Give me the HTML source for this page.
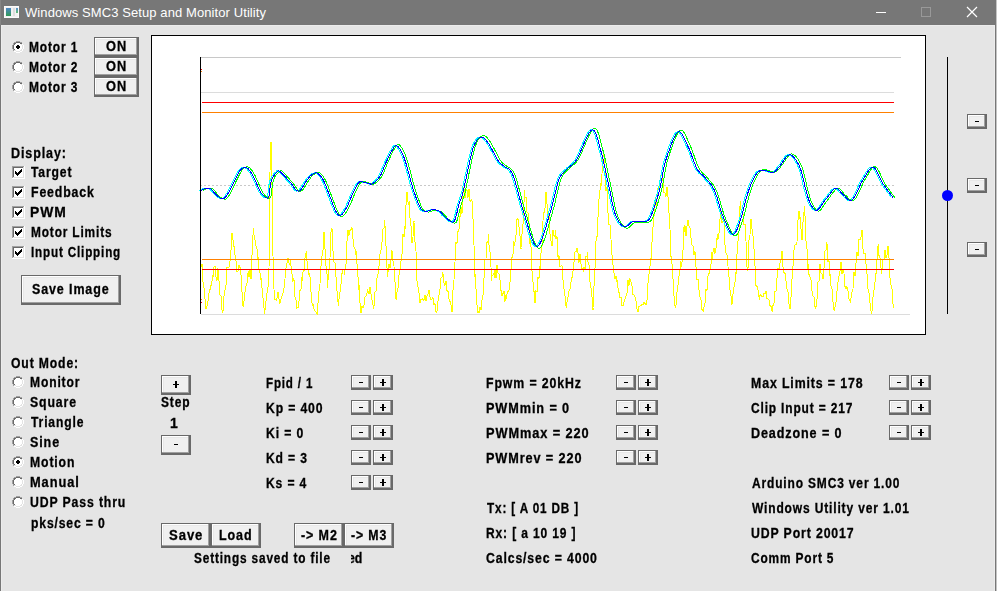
<!DOCTYPE html>
<html><head><meta charset="utf-8"><style>
*{margin:0;padding:0;box-sizing:border-box}
html,body{width:997px;height:591px;overflow:hidden;background:#e5e5e5}
body{position:relative;font-family:"Liberation Sans",sans-serif}
.t{position:absolute;font-weight:bold;font-size:14px;line-height:15px;white-space:pre;color:#000;filter:grayscale(1);-webkit-text-stroke:0.3px #000}
.b{position:absolute;background:#f0f0f0;border:1px solid #696969;box-shadow:inset -1px -1px #696969,inset -2px -2px #a0a0a0,inset 1px 1px #fff,inset 2px 2px #e8e8e8;font-weight:bold;font-size:13px;text-align:center;white-space:pre;color:#000}
.mi{position:absolute;left:7px;top:6px;width:4px;height:1px;background:#000}
.pl{position:absolute;left:6px;top:3px;width:6px;height:7px}
.pl:before{content:"";position:absolute;left:0;top:3px;width:6px;height:1px;background:#000}
.pl:after{content:"";position:absolute;left:2px;top:0;width:2px;height:7px;background:#000}
.r{position:absolute;width:12px;height:12px;border-radius:50%;background:#fff;border:1px solid;border-color:#a0a0a0 #fff #fff #a0a0a0;box-shadow:inset 1px 1px #696969}
.rd{position:absolute;left:3px;top:3px;width:4px;height:4px;border-radius:50%;background:#000}
.c{position:absolute;width:13px;height:13px;background:#fff;border:1px solid;border-color:#a0a0a0 #fff #fff #a0a0a0;box-shadow:inset 1px 1px #696969,inset -1px -1px #e3e3e3}
.px{position:absolute;shape-rendering:crispEdges}
</style></head><body>
<div style="position:absolute;left:0;top:0;width:996px;height:25px;background:#777"></div>
<div style="position:absolute;left:0;top:0;width:1px;height:591px;background:#777"></div>
<div style="position:absolute;left:995px;top:0;width:1px;height:591px;background:#777"></div>
<div style="position:absolute;left:996px;top:0;width:1px;height:591px;background:#c4c4c4"></div>
<div style="position:absolute;left:1px;top:25px;width:994px;height:1px;background:#ececec"></div>
<div style="position:absolute;left:1px;top:25px;width:1px;height:566px;background:#ececec"></div>
<div style="position:absolute;left:994px;top:25px;width:1px;height:566px;background:#ececec"></div>
<div style="position:absolute;left:4px;top:6px;width:15px;height:12px;background:#f2f2f2;border:1px solid #fbfbfb"></div>
<div style="position:absolute;left:6px;top:8px;width:5px;height:8px;background:linear-gradient(#4f86c6,#2f9a55)"></div>
<div style="position:absolute;left:13px;top:8px;width:2px;height:8px;background:#dedede"></div>
<div style="position:absolute;left:16px;top:8px;width:2px;height:5px;background:linear-gradient(#5a8fd0,#5fc070)"></div>
<div style="position:absolute;left:0;top:0;width:1px;height:25px;background:#858585"></div>
<div style="position:absolute;left:25px;top:4px;font-size:13px;line-height:17px;color:#fff;white-space:pre;letter-spacing:0.09px">Windows SMC3 Setup and Monitor Utility</div>
<svg style="position:absolute;left:870px;top:0" width="120" height="25">
<path d="M6 12.5 H16" stroke="#fff" stroke-width="1"/>
<rect x="51.5" y="7.5" width="9" height="9" fill="none" stroke="#999"/>
<path d="M97 7 L107 17 M107 7 L97 17" stroke="#fff" stroke-width="1.2"/>
</svg>
<div style="position:absolute;left:151px;top:35px;width:775px;height:300px;background:#fff;border:1px solid #000"></div>
<svg style="position:absolute;left:0;top:0" width="997" height="591" shape-rendering="crispEdges">
<path d="M201 57.5 H901" stroke="#c8c8c8" stroke-width="1"/>
<path d="M201 92.5 H894 M201 314.5 H910" stroke="#dcdcdc" stroke-width="1"/>
<path d="M200 185.5 H894" stroke="#c8c8c8" stroke-width="1" stroke-dasharray="2,2"/>
<polyline points="201.8,267.3 202.0,263.9 203.0,282.2 203.6,285.0 204.0,287.9 205.0,299.1 206.0,309.4 206.3,308.6 207.0,305.7 208.0,301.0 209.0,292.8 209.9,292.4 210.0,289.6 211.0,285.6 212.0,281.4 212.5,276.3 213.0,277.2 214.0,266.6 214.3,266.5 215.0,266.4 216.0,276.9 216.1,280.0 217.0,280.3 217.9,271.0 218.0,268.4 219.0,280.7 220.0,294.7 221.0,296.1 222.0,309.9 222.4,313.0 223.0,310.8 224.0,296.4 225.0,290.2 226.0,285.3 226.9,272.7 227.0,267.8 228.0,268.1 229.0,266.7 230.0,261.2 230.5,256.6 231.0,250.1 232.0,233.5 232.3,235.0 233.0,240.4 234.0,246.5 234.0,248.5 235.0,255.1 236.0,260.6 236.7,267.3 237.0,271.7 238.0,270.8 239.0,264.9 240.0,268.2 240.3,267.3 241.0,275.0 242.0,291.7 243.0,305.8 243.0,306.8 244.0,301.4 245.0,292.4 246.0,286.5 247.0,282.7 248.0,272.6 248.4,271.0 249.0,277.2 250.0,270.4 251.0,279.1 251.0,276.3 252.0,255.0 253.0,234.7 253.4,228.0 254.0,234.8 255.0,240.0 255.6,244.0 256.0,246.0 257.0,248.5 257.3,258.4 258.0,256.5 259.0,270.1 260.0,273.0 261.0,280.2 261.0,278.0 262.0,287.9 263.0,297.8 264.0,307.7 264.6,313.6 265.0,310.0 266.0,301.1 266.6,295.7 267.0,293.1 268.0,286.8 268.9,281.0 269.0,269.2 269.5,210.0 270.0,172.2 270.4,142.0 271.0,142.0 271.5,142.0 272.0,185.2 272.6,237.0 273.0,256.0 273.4,275.0 274.0,289.4 274.4,299.0 275.0,299.4 276.0,300.0 276.7,300.4 277.0,298.2 277.9,291.8 278.0,292.4 279.0,298.6 279.8,303.5 280.0,302.7 281.0,298.8 281.4,297.3 282.0,295.7 283.0,292.9 283.7,291.0 284.0,288.2 284.9,280.0 285.0,278.7 285.7,270.0 286.0,268.3 287.0,262.8 287.8,258.4 288.0,258.5 289.0,263.1 290.0,265.2 290.5,260.0 291.0,265.7 292.0,273.8 293.0,281.8 293.2,278.0 294.0,280.0 295.0,296.7 296.0,300.1 296.8,308.6 297.0,308.0 298.0,307.9 298.0,305.8 299.0,301.5 300.0,290.4 301.0,289.1 302.0,276.7 302.0,281.4 303.0,272.2 304.0,270.6 305.0,258.1 306.0,253.2 306.1,250.9 307.0,260.7 308.0,268.9 309.0,275.0 309.2,273.2 310.0,276.6 311.0,292.0 312.0,303.3 312.2,305.8 313.0,303.9 314.0,308.9 315.0,311.0 316.0,311.8 317.0,313.4 317.3,313.9 318.0,302.9 319.0,291.4 320.0,283.7 320.4,277.3 321.0,266.2 322.0,255.9 323.0,250.1 324.0,232.2 324.4,233.6 325.0,248.7 326.0,266.4 327.0,273.5 327.5,287.5 328.0,280.5 329.0,269.3 330.0,258.0 331.0,231.9 331.5,228.5 332.0,228.0 333.0,251.0 334.0,261.8 335.0,262.7 335.6,273.2 336.0,276.9 337.0,290.6 338.0,302.1 338.6,305.8 339.0,299.0 340.0,292.6 341.0,284.0 341.7,273.2 342.0,274.0 343.0,270.1 344.0,269.3 344.7,275.3 345.0,269.1 346.0,264.3 347.0,240.9 347.8,238.7 348.0,230.1 349.0,235.5 350.0,229.6 351.0,230.4 352.0,227.5 352.5,235.6 353.0,238.9 354.0,247.4 355.0,248.7 355.9,255.0 356.0,250.6 357.0,263.6 358.0,276.7 359.0,289.9 359.0,285.4 360.0,303.2 361.0,312.9 361.0,312.9 362.0,305.8 363.0,307.6 364.0,304.8 365.0,297.2 366.0,296.2 367.0,293.4 367.1,289.5 368.0,291.1 369.0,294.3 370.0,286.9 370.2,291.5 371.0,294.1 372.0,300.1 373.0,305.0 373.2,308.8 374.0,306.3 375.0,292.2 376.0,290.9 377.0,277.7 378.0,273.7 378.3,273.2 379.0,266.1 380.0,253.9 381.0,250.2 382.0,241.8 383.0,229.2 384.0,228.1 384.4,220.4 385.0,225.7 386.0,246.0 387.0,267.9 387.4,277.3 388.0,272.3 389.0,264.0 390.0,267.6 391.0,260.7 391.5,252.9 392.0,250.5 393.0,261.3 394.0,266.4 394.5,273.2 395.0,281.7 396.0,298.5 396.0,300.3 397.0,292.3 398.0,288.7 399.0,274.9 400.0,270.2 400.4,265.1 401.0,261.1 402.0,254.6 403.0,234.4 404.0,237.2 404.8,225.6 405.0,230.0 406.0,205.7 406.5,194.8 407.0,192.2 408.0,201.6 409.0,204.7 409.2,201.4 410.0,217.8 411.0,225.6 411.4,238.7 412.0,243.4 413.0,236.8 414.0,220.9 414.0,222.3 415.0,241.7 416.0,251.3 416.9,274.0 417.0,280.7 418.0,286.9 419.0,293.4 420.0,302.9 420.2,302.5 421.0,299.5 422.0,299.8 423.0,298.6 423.5,300.3 424.0,300.5 425.0,295.1 426.0,300.7 427.0,295.8 428.0,294.4 429.0,290.1 429.0,293.7 430.0,296.8 431.0,299.4 432.0,299.3 433.0,297.6 433.4,300.3 434.0,304.7 435.0,303.6 436.0,312.0 436.7,312.4 437.0,310.7 438.0,301.2 439.0,295.5 440.0,289.3 441.0,277.9 442.0,277.4 442.2,271.7 443.0,273.6 444.0,282.6 445.0,285.4 446.0,281.2 446.5,287.1 447.0,290.5 448.0,291.4 449.0,299.3 450.0,301.4 451.0,304.8 452.0,311.8 452.0,309.1 453.0,290.1 454.0,279.7 455.0,261.8 456.0,241.8 456.4,243.1 457.0,242.7 458.0,231.5 459.0,229.5 459.7,216.8 460.0,217.1 461.0,207.4 462.0,214.0 463.0,193.4 464.0,187.2 464.1,194.8 465.0,198.1 466.0,190.6 467.0,189.4 468.0,197.7 468.5,190.4 469.0,188.6 470.0,201.4 471.0,199.7 471.8,199.2 472.0,200.7 473.0,218.5 474.0,245.1 475.0,277.5 475.1,274.0 476.0,288.8 477.0,304.8 477.3,312.4 478.0,311.5 479.0,312.9 480.0,306.8 481.0,309.7 481.7,306.9 482.0,300.4 483.0,295.1 484.0,278.5 485.0,259.7 486.0,259.8 486.1,252.0 487.0,242.5 488.0,240.9 488.3,234.4 489.0,244.6 490.0,252.3 491.0,267.3 491.6,280.5 492.0,276.2 493.0,275.4 494.0,273.2 494.0,278.3 495.0,270.3 496.0,278.4 497.0,265.2 497.3,269.5 498.0,273.1 499.0,273.7 500.0,280.0 501.0,290.6 501.7,291.5 502.0,296.1 503.0,293.5 504.0,291.2 505.0,301.5 506.0,295.3 506.1,299.2 507.0,294.3 508.0,291.3 509.0,290.6 509.4,284.9 510.0,282.6 511.0,270.3 512.0,257.5 513.0,254.3 513.8,241.0 514.0,246.4 515.0,242.2 516.0,235.0 517.0,219.4 518.0,218.5 518.2,221.2 519.0,227.3 520.0,235.6 521.0,249.0 521.5,247.5 522.0,234.3 523.0,224.5 524.0,202.0 524.8,190.4 525.0,197.4 526.0,196.9 527.0,212.0 527.0,212.4 528.0,213.2 529.0,223.2 530.0,244.0 530.3,238.7 531.0,247.0 532.0,271.1 533.0,282.2 533.6,291.5 534.0,291.5 534.7,302.5 535.0,303.0 536.0,290.7 537.0,291.9 538.0,277.4 539.0,278.7 540.0,266.5 540.2,269.5 541.0,253.3 542.0,246.2 543.0,220.8 543.5,212.4 544.0,212.5 545.0,208.5 546.0,191.6 546.7,194.8 547.0,204.3 548.0,217.2 549.0,215.0 550.0,233.5 551.0,240.6 551.1,245.3 552.0,246.2 553.0,230.5 554.0,235.4 555.0,237.0 555.5,230.0 556.0,238.5 557.0,236.4 558.0,256.7 558.8,258.5 559.0,255.4 560.0,266.7 561.0,265.8 562.0,264.9 562.1,269.5 563.0,279.8 564.0,288.8 565.0,295.9 566.0,306.2 566.5,306.9 567.0,302.5 568.0,296.9 569.0,290.7 570.0,289.1 571.0,282.4 572.0,276.7 572.0,278.3 573.0,271.3 574.0,262.3 575.0,251.7 576.0,251.9 576.4,249.7 577.0,247.7 578.0,252.9 579.0,262.5 580.0,254.1 580.8,260.7 581.0,263.6 582.0,268.6 583.0,269.0 583.0,271.7 584.0,266.8 585.0,269.1 586.0,255.9 587.0,256.9 587.4,251.9 588.0,262.2 589.0,264.5 589.6,271.7 590.0,281.7 591.0,287.9 592.0,297.3 593.0,309.5 593.0,308.0 594.0,286.0 595.0,268.4 596.0,240.7 596.3,238.0 597.0,236.8 598.0,217.2 599.0,199.1 600.0,189.9 600.6,183.4 601.0,186.2 602.0,173.8 603.0,157.1 603.5,152.0 604.0,155.3 605.0,167.7 606.0,190.6 607.0,186.9 607.8,203.5 608.0,212.9 609.0,224.4 610.0,225.0 611.0,239.4 612.0,255.0 612.1,255.2 613.0,264.8 614.0,272.5 615.0,278.6 616.0,276.1 616.4,281.0 617.0,280.3 618.0,287.6 619.0,292.5 620.0,297.6 621.0,297.3 622.0,305.7 622.2,305.5 623.0,305.9 624.0,302.4 625.0,299.3 626.0,295.8 627.0,292.8 628.0,279.9 629.0,285.6 629.4,279.6 630.0,278.6 631.0,281.8 632.0,285.9 632.2,286.8 633.0,294.3 634.0,294.9 635.0,296.7 636.0,300.9 637.0,308.8 638.0,311.9 638.0,309.8 639.0,306.3 640.0,306.1 641.0,305.9 642.0,303.8 643.0,305.3 644.0,301.7 645.0,303.4 646.0,305.2 646.6,301.2 647.0,300.2 648.0,283.1 649.0,273.7 650.0,265.9 650.9,258.0 651.0,258.9 652.0,242.2 653.0,226.9 654.0,215.9 655.0,200.7 655.2,203.5 656.0,206.0 657.0,198.1 658.0,188.0 659.0,188.2 660.0,180.0 661.0,175.2 661.0,174.7 662.0,175.5 663.0,180.9 664.0,193.0 665.0,192.6 666.0,196.6 667.0,187.1 668.0,197.1 668.2,197.7 669.0,212.5 670.0,229.2 671.0,256.5 671.0,258.0 672.0,264.3 673.0,278.5 674.0,295.9 675.0,306.3 675.3,308.4 676.0,304.8 677.0,292.3 678.0,285.4 679.0,276.1 680.0,269.2 681.0,261.5 681.0,266.7 682.0,262.0 683.0,250.2 684.0,226.9 684.0,232.2 685.0,225.4 686.0,235.8 687.0,226.5 688.0,220.5 688.3,222.2 689.0,225.7 690.0,228.1 690.0,232.2 691.0,238.2 692.0,245.0 693.0,246.0 694.0,255.2 694.4,252.0 695.0,251.5 696.0,266.9 697.0,279.9 698.0,278.8 698.8,289.3 699.0,290.3 700.0,296.7 701.0,299.6 702.0,309.4 703.0,311.3 703.2,312.4 704.0,306.8 705.0,303.5 706.0,289.1 707.0,290.5 707.6,282.7 708.0,276.4 709.0,273.6 710.0,269.4 711.0,263.7 712.0,251.9 712.0,258.5 713.0,251.8 714.0,248.3 714.2,249.7 715.0,253.4 716.0,248.4 717.0,238.2 717.5,234.4 718.0,239.5 719.0,232.9 720.0,218.8 720.8,216.8 721.0,210.6 722.0,222.7 723.0,220.9 724.0,218.6 724.1,227.8 725.0,244.7 726.0,253.1 727.0,255.3 727.4,258.5 728.0,266.4 729.0,277.3 730.0,290.2 731.0,296.0 731.8,304.7 732.0,303.9 733.0,293.9 734.0,286.8 735.0,282.5 736.0,272.1 736.2,273.9 737.0,253.8 738.0,241.4 739.0,231.2 740.0,205.8 740.5,201.4 741.0,209.9 742.0,211.0 743.0,214.2 743.8,214.6 744.0,224.6 745.0,224.3 746.0,241.2 747.0,266.6 747.6,269.5 748.0,268.5 749.0,239.6 750.0,234.9 750.4,223.4 751.0,219.1 752.0,228.6 753.0,235.9 753.7,247.5 754.0,248.8 755.0,265.5 755.9,280.5 756.0,285.6 757.0,286.5 758.0,289.7 759.0,297.2 759.2,300.3 760.0,295.5 761.0,294.6 762.0,296.9 763.0,296.6 764.0,293.3 765.0,293.4 765.8,293.7 766.0,290.7 767.0,298.5 768.0,299.1 769.0,300.2 770.0,305.6 771.0,306.4 772.0,311.3 772.4,312.4 773.0,305.5 774.0,303.0 775.0,291.5 776.0,290.9 776.8,280.5 777.0,278.1 778.0,268.5 779.0,268.9 780.0,263.0 781.0,259.0 781.2,251.9 782.0,251.3 783.0,266.7 784.0,273.3 785.0,272.4 785.6,278.3 786.0,280.5 787.0,288.9 788.0,292.2 789.0,304.2 790.0,309.4 790.0,308.0 791.0,297.1 792.0,279.2 793.0,265.9 793.5,258.6 794.0,250.5 795.0,244.8 796.0,244.5 797.0,241.7 798.0,219.9 799.0,210.9 799.0,219.0 800.0,216.5 801.0,228.5 802.0,240.2 802.3,236.6 803.0,221.8 804.0,212.4 804.5,205.8 805.0,215.7 806.0,240.8 807.0,249.1 807.8,269.6 808.0,264.3 809.0,274.5 810.0,276.8 811.0,280.2 811.1,282.8 812.0,290.9 813.0,295.8 814.0,296.8 815.0,306.5 815.5,309.2 816.0,306.9 817.0,299.3 818.0,281.7 819.0,281.2 819.9,269.6 820.0,264.0 821.0,273.3 822.0,273.6 823.0,279.2 823.2,274.0 824.0,268.3 825.0,251.0 826.0,250.6 826.5,243.2 827.0,244.0 828.0,262.0 829.0,260.4 829.8,274.0 830.0,273.6 831.0,285.8 832.0,289.0 833.0,301.6 834.0,310.0 834.2,310.3 835.0,306.8 836.0,301.7 837.0,291.3 838.0,281.9 839.0,276.4 840.0,271.3 840.8,267.4 841.0,262.3 842.0,274.0 843.0,269.5 844.0,273.0 844.1,278.4 845.0,286.4 846.0,288.5 847.0,286.6 848.0,291.2 849.0,299.2 850.0,301.0 850.7,302.6 851.0,298.4 852.0,292.3 853.0,288.8 854.0,271.8 855.0,276.1 856.0,263.2 856.2,260.8 857.0,252.0 858.0,256.1 859.0,239.4 860.0,239.5 861.0,237.1 861.7,232.2 862.0,230.1 863.0,249.0 864.0,253.7 865.0,253.8 865.0,258.6 866.0,264.1 867.0,273.6 868.0,289.3 868.3,291.6 869.0,293.3 870.0,302.7 871.0,310.9 871.6,312.5 872.0,311.6 873.0,297.2 874.0,289.9 875.0,281.9 876.0,272.6 876.0,274.0 877.0,259.4 878.0,246.4 878.2,244.3 879.0,255.4 880.0,257.8 881.0,267.5 881.5,274.0 882.0,269.3 883.0,259.3 884.0,259.2 884.8,252.0 885.0,250.3 886.0,257.6 887.0,255.5 888.0,245.7 888.1,249.8 889.0,257.9 890.0,277.9 890.3,278.4 891.0,285.3 892.0,289.2 893.0,303.6 893.6,308.0" fill="none" stroke="#ffff00" stroke-width="1"/>
<path d="M202 102.5 H894 M202 269.5 H894" stroke="#ff0000" stroke-width="1"/>
<path d="M202 112.5 H894 M202 259.5 H894" stroke="#ff8000" stroke-width="1"/>
<polyline points="199.2,190.4 199.5,190.3 199.9,190.1 200.4,189.9 200.9,189.7 201.5,189.4 202.1,189.2 202.7,188.9 203.4,188.7 204.0,188.5 204.6,188.3 205.1,188.2 205.6,188.1 206.2,188.1 206.7,188.1 207.3,188.2 207.8,188.3 208.3,188.5 208.7,188.7 209.2,188.9 209.7,189.2 210.2,189.6 210.7,190.0 211.2,190.6 211.7,191.2 212.1,191.8 212.6,192.5 213.1,193.2 213.6,193.8 214.2,194.4 214.8,195.0 215.3,195.4 215.7,195.8 216.2,196.2 216.8,196.6 217.3,197.0 217.9,197.4 218.4,197.8 219.0,198.1 219.5,198.4 220.1,198.6 220.6,198.8 221.1,198.8 221.6,198.8 222.2,198.6 222.8,198.3 223.3,197.9 223.8,197.4 224.3,196.8 224.9,196.1 225.4,195.3 225.9,194.5 226.4,193.6 227.0,192.7 227.5,191.9 228.0,191.0 228.5,190.0 229.0,189.0 229.5,188.0 230.0,186.9 230.5,185.8 231.0,184.7 231.6,183.6 232.1,182.5 232.6,181.5 233.1,180.5 233.6,179.5 234.1,178.5 234.6,177.5 235.2,176.5 235.7,175.5 236.2,174.5 236.7,173.6 237.2,172.7 237.7,171.8 238.2,171.1 238.7,170.4 239.2,169.8 239.8,169.2 240.3,168.7 240.8,168.3 241.4,167.9 241.9,167.6 242.4,167.5 242.9,167.4 243.5,167.3 244.0,167.4 244.5,167.5 245.0,167.7 245.6,168.0 246.1,168.4 246.7,168.9 247.2,169.5 247.7,170.1 248.3,170.8 248.8,171.5 249.3,172.2 249.8,172.9 250.3,173.7 250.9,174.7 251.4,175.6 251.9,176.6 252.4,177.7 252.9,178.8 253.4,179.9 253.9,180.9 254.4,182.0 254.9,183.1 255.4,184.2 255.9,185.4 256.4,186.6 256.9,187.8 257.4,188.9 257.9,190.0 258.5,191.0 259.0,191.9 259.5,192.7 260.1,193.4 260.6,194.1 261.2,194.8 261.7,195.4 262.3,195.9 262.8,196.4 263.4,196.9 263.9,197.2 264.3,197.5 265.0,197.8 265.6,198.0 266.1,198.1 266.6,197.9 267.0,197.4 267.4,196.5 268.0,193.3 268.4,188.9 268.9,185.0 269.4,182.8 269.9,180.8 270.5,179.0 271.2,177.4 271.6,176.7 272.1,176.0 272.6,175.3 273.1,174.6 273.7,174.0 274.2,173.4 274.8,172.9 275.3,172.5 275.7,172.1 276.3,171.5 276.6,171.0 276.9,170.7 277.5,170.8 278.5,171.5 278.8,171.8 279.2,172.1 279.6,172.5 280.1,172.9 280.5,173.4 281.0,173.9 281.5,174.4 282.1,175.0 282.6,175.5 283.1,176.1 283.7,176.8 284.3,177.4 284.8,178.0 285.4,178.6 285.9,179.2 286.5,179.8 287.0,180.4 287.5,181.0 288.0,181.5 288.5,182.0 289.1,182.6 289.6,183.3 290.2,184.1 290.7,184.8 291.2,185.6 291.8,186.4 292.3,187.1 292.8,187.9 293.3,188.6 293.8,189.2 294.3,189.8 294.8,190.2 295.3,190.6 295.9,190.9 296.4,191.1 296.9,191.1 297.4,191.0 298.0,190.7 298.5,190.3 299.1,189.7 299.7,189.1 300.2,188.3 300.8,187.5 301.3,186.7 301.9,185.8 302.4,185.0 303.0,184.1 303.5,183.2 304.0,182.4 304.4,181.7 304.9,181.1 305.3,180.5 306.0,179.7 306.5,178.9 307.0,178.2 307.5,177.6 307.9,177.0 308.3,176.4 308.8,176.0 309.3,175.5 309.8,175.1 310.3,174.8 310.7,174.5 311.2,174.2 311.7,173.9 312.2,173.6 312.8,173.4 313.3,173.2 313.8,173.0 314.3,172.9 314.9,172.9 315.4,173.0 315.9,173.2 316.4,173.5 316.9,173.8 317.4,174.2 317.9,174.7 318.4,175.2 318.9,175.8 319.5,176.4 320.0,177.1 320.5,177.9 321.0,178.7 321.5,179.6 322.0,180.5 322.5,181.5 323.0,182.6 323.5,183.7 324.0,185.0 324.5,186.3 325.1,187.6 325.6,189.0 326.1,190.3 326.6,191.7 327.1,193.1 327.6,194.4 328.1,195.7 328.6,197.0 329.1,198.4 329.7,199.8 330.2,201.2 330.7,202.6 331.2,204.0 331.8,205.4 332.3,206.7 332.8,207.9 333.3,209.1 333.7,210.1 334.2,211.0 334.8,212.0 335.3,213.0 335.8,213.7 336.3,214.4 336.7,214.9 337.2,215.3 337.7,215.5 338.2,215.6 338.8,215.5 339.3,215.3 339.7,215.0 340.2,214.6 340.7,214.1 341.2,213.5 341.8,212.8 342.3,212.1 342.8,211.3 343.3,210.5 343.9,209.7 344.4,208.8 344.9,207.9 345.4,207.0 345.9,205.9 346.4,204.9 346.9,203.7 347.4,202.5 347.9,201.3 348.5,200.1 349.0,198.8 349.5,197.6 350.0,196.4 350.5,195.3 351.0,194.2 351.5,193.1 352.0,192.0 352.6,190.9 353.1,189.8 353.6,188.8 354.1,187.7 354.7,186.7 355.2,185.7 355.7,184.9 356.2,184.1 356.6,183.4 357.1,182.8 357.7,182.2 358.2,181.9 358.7,181.7 359.1,181.6 359.6,181.6 360.0,181.7 360.5,181.8 361.0,181.9 361.6,182.0 362.1,182.0 362.6,182.1 363.1,182.2 363.6,182.4 364.2,182.5 364.7,182.7 365.3,182.9 365.8,183.0 366.3,183.2 366.8,183.3 367.3,183.4 367.7,183.5 368.3,183.7 368.8,183.9 369.2,184.1 369.6,184.2 370.0,184.2 370.5,184.1 371.2,183.7 371.6,183.4 372.1,183.1 372.5,182.7 373.0,182.3 373.6,181.8 374.1,181.3 374.7,180.8 375.3,180.2 375.8,179.6 376.4,178.9 376.9,178.3 377.5,177.6 378.0,176.8 378.5,176.1 379.1,175.2 379.6,174.2 380.1,173.1 380.6,171.9 381.1,170.7 381.6,169.5 382.1,168.3 382.6,167.1 383.1,165.9 383.6,164.7 384.1,163.5 384.6,162.4 385.1,161.3 385.6,160.2 386.2,159.1 386.7,157.9 387.2,156.8 387.7,155.7 388.3,154.7 388.8,153.6 389.3,152.7 389.8,151.8 390.2,150.9 390.7,150.2 391.3,149.3 391.8,148.4 392.3,147.6 392.8,146.9 393.2,146.3 393.7,145.9 394.2,145.6 394.7,145.6 395.3,145.7 395.8,146.0 396.2,146.4 396.8,146.9 397.3,147.6 397.8,148.3 398.4,149.1 398.9,150.0 399.4,150.9 400.0,151.9 400.5,152.9 400.9,153.8 401.4,154.8 402.0,156.1 402.5,157.5 403.0,158.9 403.5,160.4 404.0,161.9 404.5,163.5 404.9,165.2 405.4,166.8 405.9,168.5 406.4,170.2 406.9,172.1 407.4,174.0 407.9,175.9 408.5,177.9 409.0,179.8 409.5,181.7 410.0,183.6 410.5,185.3 411.0,187.0 411.5,188.6 412.0,190.2 412.5,191.8 413.1,193.3 413.6,194.8 414.1,196.3 414.6,197.7 415.1,199.0 415.6,200.3 416.1,201.6 416.6,202.9 417.1,204.1 417.6,205.2 418.1,206.3 418.6,207.3 419.1,208.2 419.6,208.9 420.1,209.5 420.6,210.0 421.0,210.4 421.5,210.7 421.9,210.9 422.4,211.0 423.0,211.1 423.6,211.2 424.2,211.2 424.6,211.2 425.1,211.2 425.6,211.1 426.1,211.0 426.6,210.9 427.1,210.7 427.6,210.6 428.2,210.4 428.7,210.3 429.3,210.1 429.8,210.0 430.3,209.9 430.8,209.8 431.3,209.7 431.8,209.7 432.4,209.7 432.9,209.7 433.5,209.8 434.0,209.9 434.5,210.0 435.0,210.1 435.5,210.2 436.0,210.4 436.5,210.5 437.0,210.7 437.4,211.0 437.9,211.2 438.5,211.6 439.0,212.0 439.5,212.5 440.0,213.0 440.4,213.5 440.9,214.1 441.4,214.7 441.9,215.2 442.5,215.8 443.0,216.2 443.4,216.7 444.0,217.2 444.5,217.7 445.0,218.3 445.6,218.8 446.1,219.3 446.6,219.8 447.1,220.2 447.7,220.6 448.1,220.9 448.6,221.1 449.2,221.4 449.7,221.6 450.2,221.9 450.8,222.0 451.2,222.1 451.7,222.0 452.2,221.7 452.7,221.1 453.2,220.3 453.7,219.1 454.2,217.6 454.7,215.7 455.2,213.7 455.8,211.5 456.3,209.3 456.7,207.2 457.2,205.3 457.7,203.6 458.3,201.8 458.8,200.4 459.3,199.2 459.8,197.9 460.3,196.5 460.9,194.8 461.5,192.5 462.0,190.6 462.5,188.3 463.0,185.9 463.5,183.4 464.1,180.7 464.7,178.0 465.2,175.2 465.8,172.6 466.4,170.0 466.9,167.6 467.4,165.3 467.9,162.9 468.4,160.6 468.9,158.2 469.4,156.0 470.0,153.8 470.5,151.7 471.0,149.7 471.6,147.9 472.2,146.3 472.7,145.2 473.1,144.2 473.6,143.3 474.1,142.4 474.6,141.5 475.1,140.7 475.6,140.0 476.2,139.4 476.7,138.8 477.2,138.3 477.7,137.9 478.3,137.5 478.8,137.3 479.3,137.1 479.8,137.0 480.3,137.0 480.8,137.1 481.3,137.3 481.7,137.5 482.2,137.8 482.7,138.2 483.2,138.7 483.7,139.2 484.2,139.8 484.7,140.5 485.3,141.2 485.9,142.0 486.5,142.8 486.9,143.4 487.4,144.1 487.9,144.9 488.4,145.7 488.9,146.6 489.4,147.6 490.0,148.6 490.5,149.6 491.1,150.6 491.6,151.6 492.2,152.7 492.7,153.7 493.3,154.7 493.8,155.7 494.4,156.7 494.9,157.6 495.4,158.5 495.8,159.4 496.3,160.1 496.7,160.8 497.1,161.4 497.8,162.4 498.5,163.2 499.0,163.7 499.5,164.1 499.9,164.4 500.3,164.7 500.8,164.9 501.3,165.2 501.8,165.6 502.5,166.2 502.9,166.6 503.4,166.9 503.8,167.1 504.3,167.4 504.8,167.6 505.3,167.9 505.8,168.1 506.3,168.4 506.8,168.7 507.4,169.1 507.9,169.6 508.4,170.2 509.0,170.9 509.6,171.7 510.1,172.6 510.7,173.7 511.3,175.0 511.8,176.1 512.2,177.3 512.7,178.7 513.1,180.1 513.6,181.6 514.1,183.2 514.6,184.9 515.0,186.6 515.5,188.4 516.0,190.3 516.5,192.1 517.0,194.0 517.5,195.9 518.0,197.8 518.6,199.8 519.1,201.7 519.6,203.6 520.1,205.4 520.7,207.2 521.2,209.0 521.8,210.7 522.3,212.4 522.8,213.8 523.2,215.3 523.7,216.9 524.2,218.5 524.7,220.2 525.2,221.9 525.7,223.6 526.2,225.4 526.7,227.1 527.2,228.9 527.7,230.6 528.2,232.3 528.8,233.9 529.3,235.5 529.8,237.0 530.3,238.5 530.8,239.9 531.4,241.1 531.9,242.3 532.4,243.4 532.9,244.3 533.4,245.0 534.0,245.7 534.5,246.1 535.0,246.4 535.5,246.5 536.0,246.4 536.5,246.1 537.0,245.6 537.6,245.0 538.1,244.2 538.6,243.3 539.2,242.2 539.7,241.0 540.2,239.7 540.8,238.3 541.3,236.8 541.8,235.3 542.4,233.6 542.9,232.0 543.4,230.3 543.9,228.5 544.5,226.8 545.0,225.0 545.5,223.3 546.0,221.6 546.4,219.9 546.9,218.3 547.4,216.7 547.8,215.2 548.3,213.7 548.7,212.4 549.3,210.4 549.9,208.3 550.5,206.2 551.1,204.1 551.6,201.9 552.1,199.8 552.6,197.6 553.1,195.5 553.6,193.4 554.1,191.4 554.6,189.4 555.0,187.5 555.5,185.6 556.0,183.9 556.5,182.3 557.0,180.8 557.5,179.4 558.0,178.2 558.5,177.1 559.1,176.1 559.6,175.3 560.1,174.5 560.6,173.8 561.1,173.2 561.6,172.6 562.2,172.1 562.7,171.7 563.2,171.2 563.7,170.8 564.2,170.4 564.7,169.9 565.3,169.5 565.8,169.0 566.3,168.4 566.8,167.9 567.3,167.4 567.8,167.0 568.2,166.6 568.7,166.3 569.1,166.0 569.6,165.7 570.1,165.3 570.5,165.0 571.0,164.6 571.5,164.2 572.0,163.7 572.6,163.1 573.2,162.4 573.8,161.6 574.4,160.7 575.1,159.6 575.5,158.9 575.9,158.1 576.4,157.2 576.9,156.3 577.4,155.3 577.9,154.2 578.4,153.0 578.9,151.9 579.4,150.6 580.0,149.4 580.5,148.1 581.1,146.8 581.7,145.5 582.2,144.2 582.8,142.9 583.4,141.6 583.9,140.4 584.5,139.1 585.1,138.0 585.6,136.8 586.2,135.7 586.7,134.7 587.2,133.8 587.7,132.9 588.2,132.2 588.7,131.5 589.2,130.9 589.7,130.5 590.1,130.1 590.5,129.9 591.2,129.8 591.8,130.0 592.5,130.4 593.0,131.0 593.6,131.9 594.1,133.0 594.6,134.2 595.1,135.6 595.6,137.1 596.1,138.7 596.5,140.3 597.0,142.1 597.4,143.8 597.9,145.6 598.3,147.4 598.8,149.1 599.3,150.8 599.8,152.6 600.3,154.6 600.9,156.6 601.4,158.7 601.9,161.0 602.4,163.2 602.9,165.6 603.4,167.9 603.9,170.3 604.4,172.7 604.9,175.0 605.4,177.3 605.9,179.6 606.4,181.8 606.8,184.0 607.3,186.0 607.8,188.5 608.4,190.9 608.9,193.4 609.4,195.8 609.8,198.2 610.3,200.6 610.8,202.9 611.3,205.1 611.8,207.2 612.3,209.3 612.8,211.2 613.3,213.0 613.9,214.6 614.4,215.8 614.8,216.9 615.3,217.9 615.8,218.9 616.3,219.9 616.8,220.8 617.4,221.6 617.9,222.4 618.4,223.1 619.0,223.8 619.5,224.4 620.0,224.9 620.6,225.4 621.1,225.8 621.7,226.2 622.2,226.5 622.7,226.7 623.2,226.8 623.7,226.9 624.2,226.8 624.7,226.6 625.2,226.3 625.7,226.0 626.2,225.6 626.7,225.1 627.2,224.7 627.7,224.2 628.2,223.7 628.8,223.3 629.3,222.8 629.8,222.4 630.4,222.1 630.9,221.8 631.5,221.6 632.0,221.5 632.4,221.4 632.9,221.4 633.4,221.4 633.9,221.3 634.5,221.4 635.0,221.4 635.5,221.4 636.1,221.5 636.6,221.5 637.1,221.6 637.7,221.6 638.2,221.7 638.7,221.7 639.2,221.8 639.8,221.8 640.3,221.8 640.7,221.8 641.2,221.8 641.7,221.8 642.1,221.7 642.5,221.6 643.1,221.4 643.7,221.3 644.3,221.3 644.8,221.2 645.3,221.1 645.7,220.9 646.2,220.7 646.6,220.4 647.1,220.0 647.5,219.5 648.0,218.8 648.5,217.9 649.1,216.8 649.6,215.8 650.0,214.7 650.5,213.5 651.1,212.2 651.6,210.8 652.1,209.3 652.7,207.7 653.2,206.1 653.8,204.4 654.3,202.7 654.9,200.9 655.4,199.1 655.9,197.4 656.5,195.6 657.0,193.8 657.4,192.1 657.9,190.4 658.5,188.2 659.0,185.9 659.5,183.5 659.9,181.1 660.4,178.7 660.8,176.3 661.2,173.8 661.7,171.4 662.1,169.0 662.7,166.6 663.2,164.2 663.8,161.9 664.5,159.6 664.9,158.4 665.3,157.1 665.8,155.7 666.2,154.3 666.7,152.9 667.2,151.5 667.7,150.1 668.2,148.6 668.7,147.2 669.2,145.8 669.8,144.4 670.3,143.0 670.8,141.7 671.4,140.4 671.9,139.2 672.4,138.0 673.0,137.0 673.5,136.0 674.0,135.0 674.6,134.2 675.1,133.5 675.6,132.9 676.0,132.4 676.5,132.1 677.0,131.9 677.6,131.8 678.1,131.9 678.6,132.2 679.2,132.6 679.7,133.1 680.2,133.7 680.7,134.4 681.2,135.3 681.7,136.2 682.2,137.1 682.7,138.1 683.2,139.2 683.7,140.2 684.1,141.3 684.6,142.4 685.1,143.4 685.6,144.5 686.0,145.5 686.5,146.4 687.0,147.5 687.6,148.7 688.1,150.0 688.7,151.3 689.2,152.7 689.7,154.1 690.2,155.5 690.7,157.0 691.2,158.4 691.7,159.8 692.2,161.2 692.7,162.6 693.3,163.9 693.8,165.1 694.3,166.3 694.8,167.4 695.3,168.4 695.8,169.3 696.3,170.1 696.9,170.8 697.4,171.5 697.9,172.1 698.4,172.7 698.9,173.2 699.4,173.7 700.0,174.2 700.5,174.7 701.0,175.1 701.5,175.6 702.0,176.1 702.5,176.6 703.1,177.1 703.6,177.7 704.1,178.3 704.6,178.9 705.1,179.5 705.7,180.1 706.2,180.7 706.7,181.3 707.2,181.8 707.7,182.4 708.2,183.0 708.8,183.6 709.3,184.3 709.8,185.0 710.3,185.7 710.8,186.5 711.3,187.4 711.9,188.3 712.4,189.3 712.9,190.4 713.4,191.6 713.9,192.9 714.4,194.3 714.9,195.8 715.5,197.4 716.0,199.0 716.5,200.7 717.0,202.4 717.5,204.1 718.0,205.8 718.5,207.6 719.0,209.2 719.6,210.9 720.1,212.5 720.6,214.0 721.2,215.5 721.7,216.8 722.2,218.0 722.7,219.2 723.2,220.4 723.7,221.7 724.3,222.9 724.8,224.1 725.3,225.3 725.9,226.5 726.4,227.7 726.9,228.7 727.5,229.8 728.0,230.7 728.5,231.6 729.0,232.4 729.6,233.0 730.1,233.6 730.5,234.0 731.0,234.3 731.5,234.4 732.1,234.3 732.7,234.0 733.2,233.5 733.8,232.8 734.3,232.0 734.9,230.9 735.4,229.8 735.9,228.5 736.4,227.2 736.9,225.8 737.4,224.4 737.9,223.0 738.4,221.6 738.8,220.3 739.3,219.0 739.9,217.2 740.5,215.3 741.0,213.4 741.5,211.3 742.0,209.2 742.5,207.1 743.0,205.0 743.5,202.9 744.0,200.8 744.6,198.9 745.1,197.0 745.6,195.5 746.1,194.0 746.5,192.5 747.0,191.0 747.5,189.5 748.0,188.1 748.5,186.7 749.0,185.4 749.6,184.1 750.1,182.8 750.6,181.6 751.2,180.5 751.7,179.4 752.2,178.5 752.6,177.7 753.1,176.8 753.6,176.0 754.0,175.3 754.5,174.6 755.0,173.9 755.5,173.2 756.0,172.7 756.5,172.1 757.0,171.6 757.6,171.2 758.1,170.8 758.8,170.5 759.4,170.2 759.8,170.1 760.3,170.0 760.7,170.0 761.2,170.0 761.7,170.1 762.2,170.1 762.8,170.3 763.3,170.4 763.9,170.6 764.4,170.7 765.0,170.9 765.5,171.1 766.1,171.3 766.6,171.5 767.2,171.7 767.7,171.9 768.2,172.0 768.8,172.2 769.3,172.3 769.8,172.4 770.2,172.4 770.7,172.5 771.1,172.5 771.5,172.4 772.2,172.2 772.8,172.0 773.3,171.6 773.8,171.3 774.3,170.9 774.7,170.4 775.1,169.9 775.6,169.3 776.0,168.8 776.5,168.2 777.0,167.5 777.5,166.9 778.1,166.2 778.5,165.7 779.0,165.1 779.5,164.5 780.0,163.7 780.5,163.0 781.0,162.2 781.5,161.4 782.0,160.6 782.6,159.8 783.1,159.0 783.7,158.3 784.2,157.5 784.8,156.9 785.3,156.3 785.9,155.8 786.4,155.4 786.9,155.1 787.5,154.9 788.0,154.8 788.5,154.8 789.1,155.0 789.6,155.2 790.1,155.5 790.7,155.8 791.2,156.3 791.8,156.8 792.3,157.3 792.9,157.9 793.4,158.6 794.0,159.3 794.5,160.1 795.0,160.9 795.5,161.7 796.0,162.6 796.5,163.4 797.0,164.3 797.5,165.3 797.9,166.2 798.5,167.7 799.1,169.3 799.7,171.1 800.2,173.1 800.8,175.1 801.3,177.1 801.8,179.2 802.3,181.3 802.7,183.3 803.2,185.3 803.6,187.2 804.1,188.9 804.5,190.4 805.1,192.6 805.7,194.6 806.2,196.4 806.7,198.1 807.2,199.6 807.7,201.0 808.3,202.3 808.9,203.6 809.3,204.4 809.8,205.2 810.2,205.9 810.7,206.7 811.2,207.4 811.7,208.1 812.2,208.7 812.7,209.2 813.2,209.7 813.8,210.0 814.3,210.2 814.9,210.3 815.5,210.2 816.0,210.0 816.4,209.7 816.9,209.3 817.4,208.8 817.9,208.3 818.4,207.6 818.9,206.9 819.4,206.2 820.0,205.4 820.5,204.6 821.0,203.8 821.6,203.0 822.1,202.2 822.7,201.4 823.2,200.6 823.8,199.9 824.3,199.2 824.8,198.6 825.3,198.0 825.8,197.3 826.4,196.6 826.9,195.9 827.4,195.1 828.0,194.4 828.5,193.7 829.0,193.0 829.6,192.3 830.1,191.6 830.7,191.0 831.2,190.4 831.7,189.8 832.2,189.4 832.7,189.0 833.2,188.6 833.7,188.4 834.2,188.2 834.8,188.1 835.3,188.2 835.9,188.4 836.4,188.7 836.9,189.2 837.4,189.7 837.9,190.2 838.4,190.8 838.8,191.4 839.3,192.1 839.8,192.7 840.3,193.3 840.8,193.9 841.4,194.4 841.9,194.8 842.4,195.2 842.9,195.6 843.4,196.1 843.8,196.6 844.3,197.1 844.8,197.7 845.3,198.2 845.8,198.7 846.3,199.2 846.9,199.6 847.4,199.9 847.9,200.2 848.5,200.3 849.0,200.4 849.6,200.3 850.1,200.1 850.7,199.7 851.2,199.3 851.6,198.8 852.1,198.1 852.6,197.4 853.1,196.6 853.6,195.8 854.1,194.8 854.6,193.8 855.1,192.8 855.6,191.7 856.1,190.6 856.7,189.5 857.2,188.4 857.7,187.2 858.2,186.1 858.7,185.0 859.2,184.0 859.7,182.9 860.2,182.0 860.7,181.0 861.2,180.2 861.7,179.4 862.2,178.5 862.8,177.6 863.3,176.7 863.9,175.8 864.4,174.9 864.9,174.0 865.4,173.1 865.9,172.3 866.5,171.4 867.0,170.7 867.5,170.0 868.0,169.3 868.5,168.7 869.0,168.2 869.5,167.8 870.0,167.5 870.6,167.3 871.1,167.3 871.6,167.3 872.1,167.5 872.6,167.8 873.2,168.3 873.7,168.9 874.2,169.7 874.7,170.5 875.2,171.4 875.8,172.4 876.3,173.4 876.8,174.5 877.3,175.6 877.8,176.7 878.4,177.8 878.9,178.9 879.4,180.0 879.9,181.1 880.5,182.0 881.0,183.0 881.5,183.8 882.0,184.6 882.5,185.3 883.1,186.1 883.7,186.9 884.2,187.7 884.8,188.5 885.4,189.3 886.0,190.1 886.6,190.9 887.1,191.7 887.7,192.4 888.2,193.1 888.7,193.8 889.2,194.5 889.7,195.1 890.1,195.7 890.5,196.2 890.9,196.7 891.2,197.1 891.5,197.5" fill="none" stroke="#00ffff" stroke-width="1"/>
<polyline points="202.7,190.6 203.0,190.4 203.4,190.3 203.9,190.0 204.4,189.8 205.0,189.5 205.6,189.3 206.2,189.0 206.9,188.8 207.5,188.6 208.1,188.4 208.6,188.3 209.1,188.2 209.7,188.2 210.2,188.2 210.8,188.3 211.3,188.4 211.8,188.6 212.2,188.8 212.7,189.0 213.2,189.4 213.7,189.7 214.2,190.2 214.7,190.7 215.2,191.4 215.6,192.0 216.1,192.7 216.6,193.4 217.1,194.1 217.7,194.7 218.3,195.3 218.8,195.7 219.2,196.1 219.7,196.5 220.3,197.0 220.8,197.4 221.4,197.8 221.9,198.2 222.5,198.5 223.0,198.8 223.6,199.0 224.1,199.2 224.6,199.3 225.1,199.2 225.7,199.0 226.3,198.7 226.8,198.3 227.3,197.7 227.8,197.1 228.4,196.4 228.9,195.6 229.4,194.8 229.9,193.9 230.5,192.9 231.0,192.1 231.5,191.2 232.0,190.2 232.5,189.2 233.0,188.1 233.5,186.9 234.0,185.8 234.5,184.7 235.1,183.5 235.6,182.4 236.1,181.4 236.6,180.4 237.1,179.4 237.6,178.3 238.1,177.3 238.7,176.3 239.2,175.2 239.7,174.2 240.2,173.2 240.7,172.3 241.2,171.5 241.7,170.7 242.2,170.0 242.7,169.3 243.3,168.7 243.8,168.2 244.3,167.7 244.9,167.4 245.4,167.1 245.9,166.9 246.4,166.8 247.0,166.8 247.5,166.9 248.0,167.0 248.5,167.2 249.1,167.5 249.6,167.9 250.2,168.4 250.7,169.0 251.2,169.7 251.8,170.3 252.3,171.1 252.8,171.8 253.3,172.5 253.8,173.4 254.4,174.3 254.9,175.3 255.4,176.4 255.9,177.5 256.4,178.6 256.9,179.7 257.4,180.8 257.9,181.9 258.4,183.0 258.9,184.2 259.4,185.4 259.9,186.6 260.4,187.8 260.9,189.0 261.4,190.1 262.0,191.2 262.5,192.1 263.0,192.9 263.6,193.7 264.1,194.4 264.7,195.1 265.2,195.7 265.8,196.3 266.3,196.8 266.9,197.2 267.4,197.6 267.8,197.9 268.5,198.2 269.1,198.4 269.6,198.5 270.1,198.2 270.5,197.7 270.9,196.8 271.5,193.5 271.9,189.1 272.4,185.0 272.9,182.7 273.4,180.7 274.0,178.9 274.7,177.2 275.1,176.4 275.6,175.7 276.1,175.0 276.6,174.3 277.2,173.7 277.7,173.1 278.3,172.6 278.8,172.1 279.2,171.7 279.8,171.1 280.1,170.6 280.4,170.3 281.0,170.4 282.0,171.1 282.3,171.4 282.7,171.7 283.1,172.1 283.6,172.5 284.0,173.0 284.5,173.5 285.0,174.1 285.6,174.7 286.1,175.3 286.6,175.9 287.2,176.5 287.8,177.1 288.3,177.8 288.9,178.4 289.4,179.0 290.0,179.7 290.5,180.3 291.0,180.8 291.5,181.4 292.0,181.9 292.6,182.6 293.1,183.3 293.7,184.0 294.2,184.8 294.7,185.6 295.3,186.4 295.8,187.2 296.3,188.0 296.8,188.7 297.3,189.3 297.8,189.9 298.3,190.4 298.8,190.8 299.4,191.1 299.9,191.3 300.4,191.3 300.9,191.1 301.5,190.9 302.0,190.4 302.6,189.9 303.2,189.2 303.7,188.4 304.3,187.6 304.8,186.8 305.4,185.9 305.9,185.0 306.5,184.1 307.0,183.2 307.5,182.4 307.9,181.6 308.4,180.9 308.8,180.4 309.5,179.5 310.0,178.7 310.5,178.0 311.0,177.3 311.4,176.7 311.8,176.2 312.3,175.7 312.8,175.2 313.3,174.8 313.8,174.5 314.2,174.2 314.7,173.8 315.2,173.5 315.7,173.3 316.2,173.0 316.8,172.8 317.3,172.7 317.8,172.6 318.4,172.6 318.9,172.7 319.4,172.8 319.9,173.1 320.4,173.5 320.9,173.9 321.4,174.3 321.9,174.9 322.4,175.5 323.0,176.2 323.5,176.9 324.0,177.7 324.5,178.5 325.0,179.4 325.5,180.4 326.0,181.4 326.5,182.5 327.0,183.7 327.5,185.0 328.0,186.3 328.6,187.7 329.1,189.1 329.6,190.5 330.1,191.9 330.6,193.3 331.1,194.7 331.6,196.0 332.1,197.4 332.6,198.8 333.2,200.2 333.7,201.7 334.2,203.1 334.7,204.6 335.3,206.0 335.8,207.3 336.3,208.6 336.8,209.8 337.2,210.9 337.7,211.8 338.3,212.9 338.8,213.8 339.3,214.6 339.8,215.3 340.2,215.8 340.7,216.2 341.2,216.4 341.7,216.5 342.3,216.4 342.8,216.2 343.2,215.9 343.7,215.5 344.2,215.0 344.7,214.4 345.3,213.7 345.8,212.9 346.3,212.1 346.8,211.3 347.4,210.4 347.9,209.5 348.4,208.6 348.9,207.6 349.4,206.6 349.9,205.4 350.4,204.3 350.9,203.0 351.4,201.8 352.0,200.5 352.5,199.2 353.0,198.0 353.5,196.8 354.0,195.6 354.5,194.5 355.0,193.4 355.5,192.3 356.1,191.1 356.6,190.0 357.1,188.9 357.6,187.8 358.2,186.7 358.7,185.8 359.2,184.8 359.7,184.0 360.1,183.3 360.6,182.7 361.2,182.2 361.7,181.8 362.2,181.6 362.6,181.5 363.1,181.5 363.5,181.6 364.0,181.7 364.5,181.8 365.1,181.9 365.6,182.0 366.1,182.0 366.6,182.2 367.1,182.3 367.7,182.5 368.2,182.6 368.8,182.8 369.3,183.0 369.8,183.1 370.3,183.2 370.8,183.4 371.2,183.5 371.8,183.6 372.3,183.8 372.7,184.1 373.1,184.2 373.5,184.2 374.0,184.1 374.7,183.7 375.1,183.4 375.6,183.0 376.0,182.6 376.5,182.2 377.1,181.7 377.6,181.2 378.2,180.6 378.8,180.0 379.3,179.4 379.9,178.8 380.4,178.1 381.0,177.4 381.5,176.6 382.0,175.8 382.6,174.9 383.1,173.8 383.6,172.7 384.1,171.5 384.6,170.3 385.1,169.1 385.6,167.8 386.1,166.5 386.6,165.3 387.1,164.1 387.6,162.9 388.1,161.7 388.6,160.6 389.1,159.4 389.7,158.3 390.2,157.1 390.7,156.0 391.2,154.8 391.8,153.8 392.3,152.7 392.8,151.7 393.3,150.8 393.7,149.9 394.2,149.2 394.8,148.2 395.3,147.3 395.8,146.5 396.3,145.8 396.7,145.2 397.2,144.7 397.7,144.5 398.2,144.4 398.8,144.5 399.3,144.8 399.7,145.2 400.3,145.8 400.8,146.4 401.3,147.2 401.9,148.0 402.4,148.9 402.9,149.9 403.5,150.9 404.0,151.9 404.4,152.9 404.9,153.9 405.5,155.2 406.0,156.6 406.5,158.1 407.0,159.7 407.5,161.3 408.0,162.9 408.4,164.6 408.9,166.3 409.4,168.0 409.9,169.8 410.4,171.7 410.9,173.7 411.4,175.7 412.0,177.7 412.5,179.7 413.0,181.6 413.5,183.5 414.0,185.3 414.5,187.0 415.0,188.7 415.5,190.4 416.0,192.0 416.6,193.6 417.1,195.1 417.6,196.6 418.1,198.0 418.6,199.4 419.1,200.8 419.6,202.1 420.1,203.4 420.6,204.6 421.1,205.8 421.6,206.9 422.1,208.0 422.6,208.8 423.1,209.6 423.6,210.2 424.1,210.7 424.5,211.1 425.0,211.4 425.4,211.6 425.9,211.8 426.5,211.9 427.1,211.9 427.7,212.0 428.1,212.0 428.6,212.0 429.1,211.9 429.6,211.8 430.1,211.6 430.6,211.5 431.1,211.3 431.7,211.2 432.2,211.0 432.8,210.9 433.3,210.7 433.8,210.6 434.3,210.5 434.8,210.5 435.3,210.4 435.9,210.5 436.4,210.5 437.0,210.5 437.5,210.6 438.0,210.7 438.5,210.8 439.0,211.0 439.5,211.1 440.0,211.3 440.5,211.5 440.9,211.7 441.4,212.0 442.0,212.4 442.5,212.8 443.0,213.3 443.5,213.8 443.9,214.4 444.4,215.0 444.9,215.6 445.4,216.1 446.0,216.7 446.5,217.2 446.9,217.7 447.5,218.2 448.0,218.7 448.5,219.3 449.1,219.8 449.6,220.3 450.1,220.8 450.6,221.2 451.2,221.6 451.6,221.9 452.1,222.2 452.7,222.5 453.2,222.7 453.7,223.0 454.3,223.1 454.7,223.2 455.2,223.1 455.7,222.8 456.2,222.2 456.7,221.4 457.2,220.1 457.7,218.5 458.2,216.6 458.7,214.5 459.3,212.3 459.8,210.1 460.2,207.9 460.7,205.9 461.2,204.2 461.8,202.3 462.3,200.9 462.8,199.6 463.3,198.3 463.8,196.9 464.4,195.1 465.0,192.7 465.5,190.7 466.0,188.4 466.5,186.0 467.0,183.3 467.6,180.6 468.2,177.8 468.7,174.9 469.3,172.2 469.9,169.6 470.4,167.1 470.9,164.7 471.4,162.3 471.9,159.8 472.4,157.4 472.9,155.1 473.5,152.8 474.0,150.7 474.5,148.7 475.1,146.8 475.7,145.1 476.2,144.0 476.6,143.0 477.1,142.0 477.6,141.1 478.1,140.2 478.6,139.4 479.1,138.7 479.7,138.0 480.2,137.4 480.7,136.9 481.2,136.5 481.8,136.1 482.3,135.8 482.8,135.7 483.3,135.6 483.8,135.6 484.3,135.7 484.8,135.8 485.2,136.1 485.7,136.4 486.2,136.8 486.7,137.3 487.2,137.8 487.7,138.4 488.2,139.1 488.8,139.9 489.4,140.7 490.0,141.5 490.4,142.2 490.9,142.9 491.4,143.7 491.9,144.6 492.4,145.5 492.9,146.5 493.5,147.5 494.0,148.5 494.6,149.6 495.1,150.6 495.7,151.7 496.2,152.8 496.8,153.8 497.3,154.9 497.9,155.9 498.4,156.8 498.9,157.7 499.3,158.6 499.8,159.4 500.2,160.1 500.6,160.7 501.3,161.7 502.0,162.5 502.5,163.1 503.0,163.5 503.4,163.8 503.8,164.0 504.3,164.3 504.8,164.6 505.3,165.0 506.0,165.6 506.4,166.0 506.9,166.3 507.3,166.6 507.8,166.9 508.3,167.1 508.8,167.3 509.3,167.6 509.8,167.9 510.3,168.3 510.9,168.7 511.4,169.2 511.9,169.7 512.5,170.5 513.1,171.3 513.6,172.3 514.2,173.4 514.8,174.7 515.3,175.8 515.7,177.1 516.2,178.5 516.6,180.0 517.1,181.5 517.6,183.2 518.1,184.9 518.5,186.7 519.0,188.5 519.5,190.4 520.0,192.3 520.5,194.3 521.0,196.2 521.5,198.2 522.1,200.2 522.6,202.2 523.1,204.1 523.6,206.0 524.2,207.9 524.7,209.7 525.3,211.5 525.8,213.2 526.3,214.7 526.7,216.2 527.2,217.8 527.7,219.5 528.2,221.2 528.7,223.0 529.2,224.8 529.7,226.6 530.2,228.4 530.7,230.2 531.2,231.9 531.7,233.7 532.3,235.4 532.8,237.0 533.3,238.6 533.8,240.1 534.3,241.5 534.9,242.8 535.4,244.0 535.9,245.1 536.4,246.0 536.9,246.8 537.5,247.5 538.0,248.0 538.5,248.2 539.0,248.3 539.5,248.2 540.0,247.9 540.5,247.5 541.1,246.8 541.6,246.0 542.1,245.0 542.7,243.9 543.2,242.7 543.7,241.3 544.3,239.9 544.8,238.4 545.3,236.8 545.9,235.1 546.4,233.4 546.9,231.6 547.4,229.8 548.0,228.0 548.5,226.2 549.0,224.5 549.5,222.7 549.9,221.0 550.4,219.3 550.9,217.6 551.3,216.1 551.8,214.6 552.2,213.2 552.8,211.2 553.4,209.0 554.0,206.9 554.6,204.7 555.1,202.5 555.6,200.2 556.1,198.0 556.6,195.8 557.1,193.7 557.6,191.6 558.1,189.5 558.5,187.5 559.0,185.6 559.5,183.9 560.0,182.2 560.5,180.6 561.0,179.2 561.5,178.0 562.0,176.8 562.6,175.8 563.1,175.0 563.6,174.2 564.1,173.5 564.6,172.8 565.1,172.3 565.7,171.8 566.2,171.3 566.7,170.8 567.2,170.4 567.7,169.9 568.2,169.5 568.8,169.0 569.3,168.5 569.8,167.9 570.3,167.3 570.8,166.9 571.3,166.4 571.7,166.1 572.2,165.7 572.6,165.4 573.1,165.1 573.6,164.7 574.0,164.4 574.5,164.0 575.0,163.5 575.5,163.0 576.1,162.4 576.7,161.7 577.3,160.9 577.9,159.9 578.6,158.8 579.0,158.1 579.4,157.3 579.9,156.4 580.4,155.4 580.9,154.4 581.4,153.3 581.9,152.1 582.4,150.9 582.9,149.6 583.5,148.3 584.0,147.0 584.6,145.6 585.2,144.3 585.7,143.0 586.3,141.6 586.9,140.3 587.4,139.0 588.0,137.8 588.6,136.5 589.1,135.4 589.7,134.3 590.2,133.2 590.7,132.3 591.2,131.4 591.7,130.6 592.2,129.9 592.7,129.3 593.2,128.8 593.6,128.5 594.0,128.2 594.7,128.1 595.3,128.3 596.0,128.7 596.5,129.4 597.1,130.3 597.6,131.4 598.1,132.7 598.6,134.1 599.1,135.6 599.6,137.3 600.0,139.0 600.5,140.8 600.9,142.6 601.4,144.4 601.8,146.2 602.3,148.0 602.8,149.8 603.3,151.6 603.8,153.6 604.4,155.8 604.9,158.0 605.4,160.2 605.9,162.6 606.4,165.0 606.9,167.4 607.4,169.8 607.9,172.3 608.4,174.7 608.9,177.1 609.4,179.4 609.9,181.7 610.3,183.9 610.8,186.0 611.3,188.6 611.9,191.1 612.4,193.6 612.9,196.2 613.3,198.6 613.8,201.1 614.3,203.4 614.8,205.7 615.3,207.9 615.8,210.0 616.3,212.0 616.8,213.8 617.4,215.5 617.9,216.7 618.3,217.8 618.8,218.9 619.3,220.0 619.8,220.9 620.3,221.9 620.9,222.7 621.4,223.5 621.9,224.3 622.5,224.9 623.0,225.5 623.5,226.1 624.1,226.6 624.6,227.0 625.2,227.4 625.7,227.7 626.2,228.0 626.7,228.1 627.2,228.1 627.7,228.0 628.2,227.8 628.7,227.5 629.2,227.2 629.7,226.8 630.2,226.3 630.7,225.9 631.2,225.4 631.7,224.9 632.3,224.4 632.8,223.9 633.3,223.5 633.9,223.2 634.4,222.9 635.0,222.7 635.5,222.6 635.9,222.5 636.4,222.5 636.9,222.4 637.4,222.4 638.0,222.5 638.5,222.5 639.0,222.5 639.6,222.6 640.1,222.6 640.6,222.7 641.2,222.7 641.7,222.8 642.2,222.8 642.7,222.9 643.3,222.9 643.8,222.9 644.2,222.9 644.7,222.9 645.2,222.9 645.6,222.8 646.0,222.7 646.6,222.5 647.2,222.4 647.8,222.4 648.3,222.3 648.8,222.2 649.2,222.0 649.7,221.8 650.1,221.5 650.6,221.1 651.0,220.5 651.5,219.8 652.0,218.9 652.6,217.8 653.1,216.7 653.5,215.6 654.0,214.3 654.6,213.0 655.1,211.5 655.6,210.0 656.2,208.4 656.7,206.7 657.3,205.0 657.8,203.2 658.4,201.4 658.9,199.6 659.4,197.7 660.0,195.9 660.5,194.1 660.9,192.3 661.4,190.6 662.0,188.3 662.5,185.9 663.0,183.5 663.4,181.0 663.9,178.5 664.3,176.0 664.7,173.5 665.2,171.0 665.6,168.5 666.2,166.0 666.7,163.6 667.3,161.2 668.0,158.8 668.4,157.6 668.8,156.2 669.3,154.8 669.7,153.4 670.2,152.0 670.7,150.5 671.2,149.0 671.7,147.5 672.2,146.1 672.7,144.6 673.3,143.2 673.8,141.8 674.3,140.4 674.9,139.1 675.4,137.8 675.9,136.6 676.5,135.5 677.0,134.5 677.5,133.5 678.1,132.7 678.6,132.0 679.1,131.4 679.5,130.9 680.0,130.5 680.5,130.3 681.1,130.2 681.6,130.3 682.1,130.6 682.7,131.0 683.2,131.5 683.7,132.2 684.2,132.9 684.7,133.8 685.2,134.7 685.7,135.7 686.2,136.7 686.7,137.8 687.2,138.9 687.6,140.0 688.1,141.1 688.6,142.2 689.1,143.3 689.5,144.3 690.0,145.2 690.5,146.4 691.1,147.6 691.6,148.9 692.2,150.3 692.7,151.7 693.2,153.2 693.7,154.6 694.2,156.1 694.7,157.6 695.2,159.1 695.7,160.5 696.2,161.9 696.8,163.3 697.3,164.5 697.8,165.8 698.3,166.9 698.8,167.9 699.3,168.8 699.8,169.7 700.4,170.4 700.9,171.1 701.4,171.7 701.9,172.3 702.4,172.9 702.9,173.4 703.5,173.9 704.0,174.4 704.5,174.8 705.0,175.3 705.5,175.8 706.0,176.3 706.6,176.9 707.1,177.5 707.6,178.1 708.1,178.7 708.6,179.4 709.2,180.0 709.7,180.6 710.2,181.1 710.7,181.7 711.2,182.3 711.7,183.0 712.3,183.6 712.8,184.3 713.3,185.0 713.8,185.7 714.3,186.6 714.8,187.5 715.4,188.4 715.9,189.4 716.4,190.6 716.9,191.8 717.4,193.1 717.9,194.6 718.4,196.1 719.0,197.8 719.5,199.4 720.0,201.2 720.5,202.9 721.0,204.7 721.5,206.5 722.0,208.2 722.5,210.0 723.1,211.7 723.6,213.3 724.1,214.9 724.7,216.4 725.2,217.8 725.7,219.0 726.2,220.2 726.7,221.5 727.2,222.8 727.8,224.0 728.3,225.3 728.8,226.6 729.4,227.8 729.9,228.9 730.4,230.1 731.0,231.1 731.5,232.1 732.0,233.0 732.5,233.8 733.1,234.5 733.6,235.0 734.0,235.5 734.5,235.7 735.0,235.9 735.6,235.8 736.2,235.5 736.7,235.0 737.3,234.3 737.8,233.4 738.4,232.3 738.9,231.1 739.4,229.8 739.9,228.5 740.4,227.1 740.9,225.6 741.4,224.2 741.9,222.7 742.3,221.3 742.8,220.0 743.4,218.2 744.0,216.3 744.5,214.2 745.0,212.1 745.5,209.9 746.0,207.7 746.5,205.6 747.0,203.4 747.5,201.3 748.1,199.3 748.6,197.4 749.1,195.8 749.6,194.2 750.0,192.7 750.5,191.2 751.0,189.7 751.5,188.2 752.0,186.8 752.5,185.4 753.1,184.0 753.6,182.7 754.1,181.5 754.7,180.3 755.2,179.2 755.7,178.3 756.1,177.4 756.6,176.6 757.1,175.8 757.5,175.0 758.0,174.3 758.5,173.6 759.0,172.9 759.5,172.3 760.0,171.7 760.5,171.2 761.1,170.8 761.6,170.4 762.3,170.0 762.9,169.8 763.3,169.6 763.8,169.6 764.2,169.5 764.7,169.6 765.2,169.6 765.7,169.7 766.3,169.8 766.8,170.0 767.4,170.1 767.9,170.3 768.5,170.5 769.0,170.7 769.6,170.9 770.1,171.1 770.7,171.3 771.2,171.5 771.7,171.6 772.3,171.8 772.8,171.9 773.3,172.0 773.7,172.1 774.2,172.1 774.6,172.1 775.0,172.0 775.7,171.8 776.3,171.6 776.8,171.2 777.3,170.9 777.8,170.4 778.2,170.0 778.6,169.4 779.1,168.9 779.5,168.3 780.0,167.7 780.5,167.0 781.0,166.3 781.6,165.6 782.0,165.1 782.5,164.5 783.0,163.8 783.5,163.1 784.0,162.3 784.5,161.5 785.0,160.7 785.5,159.9 786.1,159.0 786.6,158.2 787.2,157.5 787.7,156.7 788.3,156.0 788.8,155.4 789.4,154.9 789.9,154.5 790.4,154.2 791.0,154.0 791.5,153.9 792.0,153.9 792.6,154.1 793.1,154.3 793.6,154.6 794.2,155.0 794.7,155.4 795.3,155.9 795.8,156.5 796.4,157.1 796.9,157.8 797.5,158.6 798.0,159.3 798.5,160.2 799.0,161.0 799.5,161.9 800.0,162.8 800.5,163.7 801.0,164.7 801.4,165.6 802.0,167.2 802.6,168.9 803.2,170.7 803.7,172.7 804.3,174.8 804.8,176.9 805.3,179.1 805.8,181.2 806.2,183.3 806.7,185.3 807.1,187.2 807.6,189.0 808.0,190.6 808.6,192.9 809.2,194.9 809.7,196.8 810.2,198.5 810.7,200.1 811.2,201.5 811.8,202.9 812.4,204.2 812.8,205.0 813.3,205.8 813.7,206.6 814.2,207.3 814.7,208.1 815.2,208.8 815.7,209.4 816.2,210.0 816.7,210.4 817.3,210.8 817.8,211.0 818.4,211.0 819.0,211.0 819.5,210.8 819.9,210.5 820.4,210.0 820.9,209.5 821.4,209.0 821.9,208.3 822.4,207.6 822.9,206.8 823.5,206.0 824.0,205.2 824.5,204.4 825.1,203.5 825.6,202.7 826.2,201.9 826.7,201.1 827.3,200.3 827.8,199.6 828.3,199.0 828.8,198.3 829.3,197.6 829.9,196.9 830.4,196.2 830.9,195.4 831.5,194.7 832.0,193.9 832.5,193.2 833.1,192.5 833.6,191.8 834.2,191.1 834.7,190.5 835.2,190.0 835.7,189.5 836.2,189.1 836.7,188.7 837.2,188.5 837.7,188.3 838.3,188.2 838.8,188.3 839.4,188.5 839.9,188.9 840.4,189.3 840.9,189.8 841.4,190.4 841.9,191.0 842.3,191.6 842.8,192.3 843.3,192.9 843.8,193.6 844.3,194.1 844.9,194.7 845.4,195.1 845.9,195.5 846.4,195.9 846.9,196.4 847.3,197.0 847.8,197.5 848.3,198.1 848.8,198.6 849.3,199.1 849.8,199.6 850.4,200.0 850.9,200.3 851.4,200.6 852.0,200.8 852.5,200.8 853.1,200.7 853.6,200.5 854.2,200.1 854.7,199.7 855.1,199.2 855.6,198.5 856.1,197.8 856.6,197.0 857.1,196.1 857.6,195.1 858.1,194.1 858.6,193.0 859.1,191.9 859.6,190.8 860.2,189.6 860.7,188.5 861.2,187.3 861.7,186.2 862.2,185.0 862.7,183.9 863.2,182.9 863.7,181.9 864.2,180.9 864.7,180.0 865.2,179.2 865.7,178.3 866.3,177.4 866.8,176.5 867.4,175.5 867.9,174.6 868.4,173.7 868.9,172.8 869.4,171.9 870.0,171.0 870.5,170.2 871.0,169.5 871.5,168.8 872.0,168.2 872.5,167.7 873.0,167.3 873.5,167.0 874.1,166.8 874.6,166.7 875.1,166.8 875.6,167.0 876.1,167.3 876.7,167.8 877.2,168.5 877.7,169.2 878.2,170.1 878.7,171.0 879.3,172.0 879.8,173.1 880.3,174.2 880.8,175.3 881.3,176.5 881.9,177.6 882.4,178.7 882.9,179.9 883.4,180.9 884.0,182.0 884.5,182.9 885.0,183.8 885.5,184.6 886.0,185.4 886.6,186.2 887.2,187.0 887.7,187.8 888.3,188.7 888.9,189.5 889.5,190.3 890.1,191.1 890.6,191.9 891.2,192.6 891.7,193.4 892.2,194.1 892.7,194.8 893.2,195.4 893.6,196.0 894.0,196.6 894.4,197.0 894.7,197.5 895.0,197.9" fill="none" stroke="#00ff00" stroke-width="1"/>
<polyline points="200.7,190.4 201.0,190.3 201.4,190.1 201.9,189.9 202.4,189.7 203.0,189.4 203.6,189.2 204.2,188.9 204.9,188.7 205.5,188.5 206.1,188.3 206.6,188.2 207.1,188.1 207.7,188.1 208.2,188.1 208.8,188.2 209.3,188.3 209.8,188.5 210.2,188.7 210.7,188.9 211.2,189.2 211.7,189.6 212.2,190.0 212.7,190.6 213.2,191.2 213.6,191.8 214.1,192.5 214.6,193.2 215.1,193.8 215.7,194.4 216.3,195.0 216.8,195.4 217.2,195.8 217.7,196.2 218.3,196.6 218.8,197.0 219.4,197.4 219.9,197.8 220.5,198.1 221.0,198.4 221.6,198.6 222.1,198.8 222.6,198.8 223.1,198.8 223.7,198.6 224.3,198.3 224.8,197.9 225.3,197.4 225.8,196.8 226.4,196.1 226.9,195.3 227.4,194.5 227.9,193.6 228.5,192.7 229.0,191.9 229.5,191.0 230.0,190.0 230.5,189.0 231.0,188.0 231.5,186.9 232.0,185.8 232.5,184.7 233.1,183.6 233.6,182.5 234.1,181.5 234.6,180.5 235.1,179.5 235.6,178.5 236.1,177.5 236.7,176.5 237.2,175.5 237.7,174.5 238.2,173.6 238.7,172.7 239.2,171.8 239.7,171.1 240.2,170.4 240.7,169.8 241.3,169.2 241.8,168.7 242.3,168.3 242.9,167.9 243.4,167.6 243.9,167.5 244.4,167.4 245.0,167.3 245.5,167.4 246.0,167.5 246.5,167.7 247.1,168.0 247.6,168.4 248.2,168.9 248.7,169.5 249.2,170.1 249.8,170.8 250.3,171.5 250.8,172.2 251.3,172.9 251.8,173.7 252.4,174.7 252.9,175.6 253.4,176.6 253.9,177.7 254.4,178.8 254.9,179.9 255.4,180.9 255.9,182.0 256.4,183.1 256.9,184.2 257.4,185.4 257.9,186.6 258.4,187.8 258.9,188.9 259.4,190.0 260.0,191.0 260.5,191.9 261.0,192.7 261.6,193.4 262.1,194.1 262.7,194.8 263.2,195.4 263.8,195.9 264.3,196.4 264.9,196.9 265.4,197.2 265.8,197.5 266.5,197.8 267.1,198.0 267.6,198.1 268.1,197.9 268.5,197.4 268.9,196.5 269.5,193.3 269.9,188.9 270.4,185.0 270.9,182.8 271.4,180.8 272.0,179.0 272.7,177.4 273.1,176.7 273.6,176.0 274.1,175.3 274.6,174.6 275.2,174.0 275.7,173.4 276.3,172.9 276.8,172.5 277.2,172.1 277.8,171.5 278.1,171.0 278.4,170.7 279.0,170.8 280.0,171.5 280.3,171.8 280.7,172.1 281.1,172.5 281.6,172.9 282.0,173.4 282.5,173.9 283.0,174.4 283.6,175.0 284.1,175.5 284.6,176.1 285.2,176.8 285.8,177.4 286.3,178.0 286.9,178.6 287.4,179.2 288.0,179.8 288.5,180.4 289.0,181.0 289.5,181.5 290.0,182.0 290.6,182.6 291.1,183.3 291.7,184.1 292.2,184.8 292.7,185.6 293.3,186.4 293.8,187.1 294.3,187.9 294.8,188.6 295.3,189.2 295.8,189.8 296.3,190.2 296.8,190.6 297.4,190.9 297.9,191.1 298.4,191.1 298.9,191.0 299.5,190.7 300.0,190.3 300.6,189.7 301.2,189.1 301.7,188.3 302.3,187.5 302.8,186.7 303.4,185.8 303.9,185.0 304.5,184.1 305.0,183.2 305.5,182.4 305.9,181.7 306.4,181.1 306.8,180.5 307.5,179.7 308.0,178.9 308.5,178.2 309.0,177.6 309.4,177.0 309.8,176.4 310.3,176.0 310.8,175.5 311.3,175.1 311.8,174.8 312.2,174.5 312.7,174.2 313.2,173.9 313.7,173.6 314.2,173.4 314.8,173.2 315.3,173.0 315.8,172.9 316.4,172.9 316.9,173.0 317.4,173.2 317.9,173.5 318.4,173.8 318.9,174.2 319.4,174.7 319.9,175.2 320.4,175.8 321.0,176.4 321.5,177.1 322.0,177.9 322.5,178.7 323.0,179.6 323.5,180.5 324.0,181.5 324.5,182.6 325.0,183.7 325.5,185.0 326.0,186.3 326.6,187.6 327.1,189.0 327.6,190.3 328.1,191.7 328.6,193.1 329.1,194.4 329.6,195.7 330.1,197.0 330.6,198.4 331.2,199.8 331.7,201.2 332.2,202.6 332.7,204.0 333.3,205.4 333.8,206.7 334.3,207.9 334.8,209.1 335.2,210.1 335.7,211.0 336.3,212.0 336.8,213.0 337.3,213.7 337.8,214.4 338.2,214.9 338.7,215.3 339.2,215.5 339.7,215.6 340.3,215.5 340.8,215.3 341.2,215.0 341.7,214.6 342.2,214.1 342.7,213.5 343.3,212.8 343.8,212.1 344.3,211.3 344.8,210.5 345.4,209.7 345.9,208.8 346.4,207.9 346.9,207.0 347.4,205.9 347.9,204.9 348.4,203.7 348.9,202.5 349.4,201.3 350.0,200.1 350.5,198.8 351.0,197.6 351.5,196.4 352.0,195.3 352.5,194.2 353.0,193.1 353.5,192.0 354.1,190.9 354.6,189.8 355.1,188.8 355.6,187.7 356.2,186.7 356.7,185.7 357.2,184.9 357.7,184.1 358.1,183.4 358.6,182.8 359.2,182.2 359.7,181.9 360.2,181.7 360.6,181.6 361.1,181.6 361.5,181.7 362.0,181.8 362.5,181.9 363.1,182.0 363.6,182.0 364.1,182.1 364.6,182.2 365.1,182.4 365.7,182.5 366.2,182.7 366.8,182.9 367.3,183.0 367.8,183.2 368.3,183.3 368.8,183.4 369.2,183.5 369.8,183.7 370.3,183.9 370.7,184.1 371.1,184.2 371.5,184.2 372.0,184.1 372.7,183.7 373.1,183.4 373.6,183.1 374.0,182.7 374.5,182.3 375.1,181.8 375.6,181.3 376.2,180.8 376.8,180.2 377.3,179.6 377.9,178.9 378.4,178.3 379.0,177.6 379.5,176.8 380.0,176.1 380.6,175.2 381.1,174.2 381.6,173.1 382.1,171.9 382.6,170.7 383.1,169.5 383.6,168.3 384.1,167.1 384.6,165.9 385.1,164.7 385.6,163.5 386.1,162.4 386.6,161.3 387.1,160.2 387.7,159.1 388.2,157.9 388.7,156.8 389.2,155.7 389.8,154.7 390.3,153.6 390.8,152.7 391.3,151.8 391.7,150.9 392.2,150.2 392.8,149.3 393.3,148.4 393.8,147.6 394.3,146.9 394.7,146.3 395.2,145.9 395.7,145.6 396.2,145.6 396.8,145.7 397.3,146.0 397.7,146.4 398.3,146.9 398.8,147.6 399.3,148.3 399.9,149.1 400.4,150.0 400.9,150.9 401.5,151.9 402.0,152.9 402.4,153.8 402.9,154.8 403.5,156.1 404.0,157.5 404.5,158.9 405.0,160.4 405.5,161.9 406.0,163.5 406.4,165.2 406.9,166.8 407.4,168.5 407.9,170.2 408.4,172.1 408.9,174.0 409.4,175.9 410.0,177.9 410.5,179.8 411.0,181.7 411.5,183.6 412.0,185.3 412.5,187.0 413.0,188.6 413.5,190.2 414.0,191.8 414.6,193.3 415.1,194.8 415.6,196.3 416.1,197.7 416.6,199.0 417.1,200.3 417.6,201.6 418.1,202.9 418.6,204.1 419.1,205.2 419.6,206.3 420.1,207.3 420.6,208.2 421.1,208.9 421.6,209.5 422.1,210.0 422.5,210.4 423.0,210.7 423.4,210.9 423.9,211.0 424.5,211.1 425.1,211.2 425.7,211.2 426.1,211.2 426.6,211.2 427.1,211.1 427.6,211.0 428.1,210.9 428.6,210.7 429.1,210.6 429.7,210.4 430.2,210.3 430.8,210.1 431.3,210.0 431.8,209.9 432.3,209.8 432.8,209.7 433.3,209.7 433.9,209.7 434.4,209.7 435.0,209.8 435.5,209.9 436.0,210.0 436.5,210.1 437.0,210.2 437.5,210.4 438.0,210.5 438.5,210.7 438.9,211.0 439.4,211.2 440.0,211.6 440.5,212.0 441.0,212.5 441.5,213.0 441.9,213.5 442.4,214.1 442.9,214.7 443.4,215.2 444.0,215.8 444.5,216.2 444.9,216.7 445.5,217.2 446.0,217.7 446.5,218.3 447.1,218.8 447.6,219.3 448.1,219.8 448.6,220.2 449.2,220.6 449.6,220.9 450.1,221.1 450.7,221.4 451.2,221.6 451.7,221.9 452.3,222.0 452.7,222.1 453.2,222.0 453.7,221.7 454.2,221.1 454.7,220.3 455.2,219.1 455.7,217.6 456.2,215.7 456.7,213.7 457.3,211.5 457.8,209.3 458.2,207.2 458.7,205.3 459.2,203.6 459.8,201.8 460.3,200.4 460.8,199.2 461.3,197.9 461.8,196.5 462.4,194.8 463.0,192.5 463.5,190.6 464.0,188.3 464.5,185.9 465.0,183.4 465.6,180.7 466.2,178.0 466.7,175.2 467.3,172.6 467.9,170.0 468.4,167.6 468.9,165.3 469.4,162.9 469.9,160.6 470.4,158.2 470.9,156.0 471.5,153.8 472.0,151.7 472.5,149.7 473.1,147.9 473.7,146.3 474.2,145.2 474.6,144.2 475.1,143.3 475.6,142.4 476.1,141.5 476.6,140.7 477.1,140.0 477.7,139.4 478.2,138.8 478.7,138.3 479.2,137.9 479.8,137.5 480.3,137.3 480.8,137.1 481.3,137.0 481.8,137.0 482.3,137.1 482.8,137.3 483.2,137.5 483.7,137.8 484.2,138.2 484.7,138.7 485.2,139.2 485.7,139.8 486.2,140.5 486.8,141.2 487.4,142.0 488.0,142.8 488.4,143.4 488.9,144.1 489.4,144.9 489.9,145.7 490.4,146.6 490.9,147.6 491.5,148.6 492.0,149.6 492.6,150.6 493.1,151.6 493.7,152.7 494.2,153.7 494.8,154.7 495.3,155.7 495.9,156.7 496.4,157.6 496.9,158.5 497.3,159.4 497.8,160.1 498.2,160.8 498.6,161.4 499.3,162.4 500.0,163.2 500.5,163.7 501.0,164.1 501.4,164.4 501.8,164.7 502.3,164.9 502.8,165.2 503.3,165.6 504.0,166.2 504.4,166.6 504.9,166.9 505.3,167.1 505.8,167.4 506.3,167.6 506.8,167.9 507.3,168.1 507.8,168.4 508.3,168.7 508.9,169.1 509.4,169.6 509.9,170.2 510.5,170.9 511.1,171.7 511.6,172.6 512.2,173.7 512.8,175.0 513.3,176.1 513.7,177.3 514.2,178.7 514.6,180.1 515.1,181.6 515.6,183.2 516.1,184.9 516.5,186.6 517.0,188.4 517.5,190.3 518.0,192.1 518.5,194.0 519.0,195.9 519.5,197.8 520.1,199.8 520.6,201.7 521.1,203.6 521.6,205.4 522.2,207.2 522.7,209.0 523.3,210.7 523.8,212.4 524.3,213.8 524.7,215.3 525.2,216.9 525.7,218.5 526.2,220.2 526.7,221.9 527.2,223.6 527.7,225.4 528.2,227.1 528.7,228.9 529.2,230.6 529.7,232.3 530.3,233.9 530.8,235.5 531.3,237.0 531.8,238.5 532.3,239.9 532.9,241.1 533.4,242.3 533.9,243.4 534.4,244.3 534.9,245.0 535.5,245.7 536.0,246.1 536.5,246.4 537.0,246.5 537.5,246.4 538.0,246.1 538.5,245.6 539.1,245.0 539.6,244.2 540.1,243.3 540.7,242.2 541.2,241.0 541.7,239.7 542.3,238.3 542.8,236.8 543.3,235.3 543.9,233.6 544.4,232.0 544.9,230.3 545.4,228.5 546.0,226.8 546.5,225.0 547.0,223.3 547.5,221.6 547.9,219.9 548.4,218.3 548.9,216.7 549.3,215.2 549.8,213.7 550.2,212.4 550.8,210.4 551.4,208.3 552.0,206.2 552.6,204.1 553.1,201.9 553.6,199.8 554.1,197.6 554.6,195.5 555.1,193.4 555.6,191.4 556.1,189.4 556.5,187.5 557.0,185.6 557.5,183.9 558.0,182.3 558.5,180.8 559.0,179.4 559.5,178.2 560.0,177.1 560.6,176.1 561.1,175.3 561.6,174.5 562.1,173.8 562.6,173.2 563.1,172.6 563.7,172.1 564.2,171.7 564.7,171.2 565.2,170.8 565.7,170.4 566.2,169.9 566.8,169.5 567.3,169.0 567.8,168.4 568.3,167.9 568.8,167.4 569.3,167.0 569.7,166.6 570.2,166.3 570.6,166.0 571.1,165.7 571.6,165.3 572.0,165.0 572.5,164.6 573.0,164.2 573.5,163.7 574.1,163.1 574.7,162.4 575.3,161.6 575.9,160.7 576.6,159.6 577.0,158.9 577.4,158.1 577.9,157.2 578.4,156.3 578.9,155.3 579.4,154.2 579.9,153.0 580.4,151.9 580.9,150.6 581.5,149.4 582.0,148.1 582.6,146.8 583.2,145.5 583.7,144.2 584.3,142.9 584.9,141.6 585.4,140.4 586.0,139.1 586.6,138.0 587.1,136.8 587.7,135.7 588.2,134.7 588.7,133.8 589.2,132.9 589.7,132.2 590.2,131.5 590.7,130.9 591.2,130.5 591.6,130.1 592.0,129.9 592.7,129.8 593.3,130.0 594.0,130.4 594.5,131.0 595.1,131.9 595.6,133.0 596.1,134.2 596.6,135.6 597.1,137.1 597.6,138.7 598.0,140.3 598.5,142.1 598.9,143.8 599.4,145.6 599.8,147.4 600.3,149.1 600.8,150.8 601.3,152.6 601.8,154.6 602.4,156.6 602.9,158.7 603.4,161.0 603.9,163.2 604.4,165.6 604.9,167.9 605.4,170.3 605.9,172.7 606.4,175.0 606.9,177.3 607.4,179.6 607.9,181.8 608.3,184.0 608.8,186.0 609.3,188.5 609.9,190.9 610.4,193.4 610.9,195.8 611.3,198.2 611.8,200.6 612.3,202.9 612.8,205.1 613.3,207.2 613.8,209.3 614.3,211.2 614.8,213.0 615.4,214.6 615.9,215.8 616.3,216.9 616.8,217.9 617.3,218.9 617.8,219.9 618.3,220.8 618.9,221.6 619.4,222.4 619.9,223.1 620.5,223.8 621.0,224.4 621.5,224.9 622.1,225.4 622.6,225.8 623.2,226.2 623.7,226.5 624.2,226.7 624.7,226.8 625.2,226.9 625.7,226.8 626.2,226.6 626.7,226.3 627.2,226.0 627.7,225.6 628.2,225.1 628.7,224.7 629.2,224.2 629.7,223.7 630.3,223.3 630.8,222.8 631.3,222.4 631.9,222.1 632.4,221.8 633.0,221.6 633.5,221.5 633.9,221.4 634.4,221.4 634.9,221.4 635.4,221.3 636.0,221.4 636.5,221.4 637.0,221.4 637.6,221.5 638.1,221.5 638.6,221.6 639.2,221.6 639.7,221.7 640.2,221.7 640.7,221.8 641.3,221.8 641.8,221.8 642.2,221.8 642.7,221.8 643.2,221.8 643.6,221.7 644.0,221.6 644.6,221.4 645.2,221.3 645.8,221.3 646.3,221.2 646.8,221.1 647.2,220.9 647.7,220.7 648.1,220.4 648.6,220.0 649.0,219.5 649.5,218.8 650.0,217.9 650.6,216.8 651.1,215.8 651.5,214.7 652.0,213.5 652.6,212.2 653.1,210.8 653.6,209.3 654.2,207.7 654.7,206.1 655.3,204.4 655.8,202.7 656.4,200.9 656.9,199.1 657.4,197.4 658.0,195.6 658.5,193.8 658.9,192.1 659.4,190.4 660.0,188.2 660.5,185.9 661.0,183.5 661.4,181.1 661.9,178.7 662.3,176.3 662.7,173.8 663.2,171.4 663.6,169.0 664.2,166.6 664.7,164.2 665.3,161.9 666.0,159.6 666.4,158.4 666.8,157.1 667.3,155.7 667.7,154.3 668.2,152.9 668.7,151.5 669.2,150.1 669.7,148.6 670.2,147.2 670.7,145.8 671.3,144.4 671.8,143.0 672.3,141.7 672.9,140.4 673.4,139.2 673.9,138.0 674.5,137.0 675.0,136.0 675.5,135.0 676.1,134.2 676.6,133.5 677.1,132.9 677.5,132.4 678.0,132.1 678.5,131.9 679.1,131.8 679.6,131.9 680.1,132.2 680.7,132.6 681.2,133.1 681.7,133.7 682.2,134.4 682.7,135.3 683.2,136.2 683.7,137.1 684.2,138.1 684.7,139.2 685.2,140.2 685.6,141.3 686.1,142.4 686.6,143.4 687.1,144.5 687.5,145.5 688.0,146.4 688.5,147.5 689.1,148.7 689.6,150.0 690.2,151.3 690.7,152.7 691.2,154.1 691.7,155.5 692.2,157.0 692.7,158.4 693.2,159.8 693.7,161.2 694.2,162.6 694.8,163.9 695.3,165.1 695.8,166.3 696.3,167.4 696.8,168.4 697.3,169.3 697.8,170.1 698.4,170.8 698.9,171.5 699.4,172.1 699.9,172.7 700.4,173.2 700.9,173.7 701.5,174.2 702.0,174.7 702.5,175.1 703.0,175.6 703.5,176.1 704.0,176.6 704.6,177.1 705.1,177.7 705.6,178.3 706.1,178.9 706.6,179.5 707.2,180.1 707.7,180.7 708.2,181.3 708.7,181.8 709.2,182.4 709.7,183.0 710.3,183.6 710.8,184.3 711.3,185.0 711.8,185.7 712.3,186.5 712.8,187.4 713.4,188.3 713.9,189.3 714.4,190.4 714.9,191.6 715.4,192.9 715.9,194.3 716.4,195.8 717.0,197.4 717.5,199.0 718.0,200.7 718.5,202.4 719.0,204.1 719.5,205.8 720.0,207.6 720.5,209.2 721.1,210.9 721.6,212.5 722.1,214.0 722.7,215.5 723.2,216.8 723.7,218.0 724.2,219.2 724.7,220.4 725.2,221.7 725.8,222.9 726.3,224.1 726.8,225.3 727.4,226.5 727.9,227.7 728.4,228.7 729.0,229.8 729.5,230.7 730.0,231.6 730.5,232.4 731.1,233.0 731.6,233.6 732.0,234.0 732.5,234.3 733.0,234.4 733.6,234.3 734.2,234.0 734.7,233.5 735.3,232.8 735.8,232.0 736.4,230.9 736.9,229.8 737.4,228.5 737.9,227.2 738.4,225.8 738.9,224.4 739.4,223.0 739.9,221.6 740.3,220.3 740.8,219.0 741.4,217.2 742.0,215.3 742.5,213.4 743.0,211.3 743.5,209.2 744.0,207.1 744.5,205.0 745.0,202.9 745.5,200.8 746.1,198.9 746.6,197.0 747.1,195.5 747.6,194.0 748.0,192.5 748.5,191.0 749.0,189.5 749.5,188.1 750.0,186.7 750.5,185.4 751.1,184.1 751.6,182.8 752.1,181.6 752.7,180.5 753.2,179.4 753.7,178.5 754.1,177.7 754.6,176.8 755.1,176.0 755.5,175.3 756.0,174.6 756.5,173.9 757.0,173.2 757.5,172.7 758.0,172.1 758.5,171.6 759.1,171.2 759.6,170.8 760.3,170.5 760.9,170.2 761.3,170.1 761.8,170.0 762.2,170.0 762.7,170.0 763.2,170.1 763.7,170.1 764.3,170.3 764.8,170.4 765.4,170.6 765.9,170.7 766.5,170.9 767.0,171.1 767.6,171.3 768.1,171.5 768.7,171.7 769.2,171.9 769.7,172.0 770.3,172.2 770.8,172.3 771.3,172.4 771.7,172.4 772.2,172.5 772.6,172.5 773.0,172.4 773.7,172.2 774.3,172.0 774.8,171.6 775.3,171.3 775.8,170.9 776.2,170.4 776.6,169.9 777.1,169.3 777.5,168.8 778.0,168.2 778.5,167.5 779.0,166.9 779.6,166.2 780.0,165.7 780.5,165.1 781.0,164.5 781.5,163.7 782.0,163.0 782.5,162.2 783.0,161.4 783.5,160.6 784.1,159.8 784.6,159.0 785.2,158.3 785.7,157.5 786.3,156.9 786.8,156.3 787.4,155.8 787.9,155.4 788.4,155.1 789.0,154.9 789.5,154.8 790.0,154.8 790.6,155.0 791.1,155.2 791.6,155.5 792.2,155.8 792.7,156.3 793.3,156.8 793.8,157.3 794.4,157.9 794.9,158.6 795.5,159.3 796.0,160.1 796.5,160.9 797.0,161.7 797.5,162.6 798.0,163.4 798.5,164.3 799.0,165.3 799.4,166.2 800.0,167.7 800.6,169.3 801.2,171.1 801.7,173.1 802.3,175.1 802.8,177.1 803.3,179.2 803.8,181.3 804.2,183.3 804.7,185.3 805.1,187.2 805.6,188.9 806.0,190.4 806.6,192.6 807.2,194.6 807.7,196.4 808.2,198.1 808.7,199.6 809.2,201.0 809.8,202.3 810.4,203.6 810.8,204.4 811.3,205.2 811.7,205.9 812.2,206.7 812.7,207.4 813.2,208.1 813.7,208.7 814.2,209.2 814.7,209.7 815.3,210.0 815.8,210.2 816.4,210.3 817.0,210.2 817.5,210.0 817.9,209.7 818.4,209.3 818.9,208.8 819.4,208.3 819.9,207.6 820.4,206.9 820.9,206.2 821.5,205.4 822.0,204.6 822.5,203.8 823.1,203.0 823.6,202.2 824.2,201.4 824.7,200.6 825.3,199.9 825.8,199.2 826.3,198.6 826.8,198.0 827.3,197.3 827.9,196.6 828.4,195.9 828.9,195.1 829.5,194.4 830.0,193.7 830.5,193.0 831.1,192.3 831.6,191.6 832.2,191.0 832.7,190.4 833.2,189.8 833.7,189.4 834.2,189.0 834.7,188.6 835.2,188.4 835.7,188.2 836.3,188.1 836.8,188.2 837.4,188.4 837.9,188.7 838.4,189.2 838.9,189.7 839.4,190.2 839.9,190.8 840.3,191.4 840.8,192.1 841.3,192.7 841.8,193.3 842.3,193.9 842.9,194.4 843.4,194.8 843.9,195.2 844.4,195.6 844.9,196.1 845.3,196.6 845.8,197.1 846.3,197.7 846.8,198.2 847.3,198.7 847.8,199.2 848.4,199.6 848.9,199.9 849.4,200.2 850.0,200.3 850.5,200.4 851.1,200.3 851.6,200.1 852.2,199.7 852.7,199.3 853.1,198.8 853.6,198.1 854.1,197.4 854.6,196.6 855.1,195.8 855.6,194.8 856.1,193.8 856.6,192.8 857.1,191.7 857.6,190.6 858.2,189.5 858.7,188.4 859.2,187.2 859.7,186.1 860.2,185.0 860.7,184.0 861.2,182.9 861.7,182.0 862.2,181.0 862.7,180.2 863.2,179.4 863.7,178.5 864.3,177.6 864.8,176.7 865.4,175.8 865.9,174.9 866.4,174.0 866.9,173.1 867.4,172.3 868.0,171.4 868.5,170.7 869.0,170.0 869.5,169.3 870.0,168.7 870.5,168.2 871.0,167.8 871.5,167.5 872.1,167.3 872.6,167.3 873.1,167.3 873.6,167.5 874.1,167.8 874.7,168.3 875.2,168.9 875.7,169.7 876.2,170.5 876.7,171.4 877.3,172.4 877.8,173.4 878.3,174.5 878.8,175.6 879.3,176.7 879.9,177.8 880.4,178.9 880.9,180.0 881.4,181.1 882.0,182.0 882.5,183.0 883.0,183.8 883.5,184.6 884.0,185.3 884.6,186.1 885.2,186.9 885.7,187.7 886.3,188.5 886.9,189.3 887.5,190.1 888.1,190.9 888.6,191.7 889.2,192.4 889.7,193.1 890.2,193.8 890.7,194.5 891.2,195.1 891.6,195.7 892.0,196.2 892.4,196.7 892.7,197.1 893.0,197.5" fill="none" stroke="#0000ff" stroke-width="1"/>
<path d="M200.5 57 V314" stroke="#000" stroke-width="1"/>
<rect x="201" y="69" width="1" height="1" fill="#ff0000"/><rect x="201" y="302" width="1" height="1" fill="#ff0000"/><rect x="201" y="71" width="1" height="1" fill="#ff8000"/><rect x="201" y="299" width="1" height="1" fill="#ff8000"/>
</svg>
<svg class="px" style="left:12px;top:41px" width="12" height="12"><rect x="4" y="0" width="4" height="1" fill="#a0a0a0"/><rect x="2" y="1" width="2" height="1" fill="#a0a0a0"/><rect x="4" y="1" width="4" height="1" fill="#696969"/><rect x="8" y="1" width="2" height="1" fill="#a0a0a0"/><rect x="1" y="2" width="1" height="1" fill="#a0a0a0"/><rect x="2" y="2" width="2" height="1" fill="#696969"/><rect x="4" y="2" width="4" height="1" fill="#ffffff"/><rect x="8" y="2" width="2" height="1" fill="#696969"/><rect x="10" y="2" width="1" height="1" fill="#e3e3e3"/><rect x="1" y="3" width="1" height="1" fill="#a0a0a0"/><rect x="2" y="3" width="1" height="1" fill="#696969"/><rect x="3" y="3" width="6" height="1" fill="#ffffff"/><rect x="9" y="3" width="1" height="1" fill="#e3e3e3"/><rect x="10" y="3" width="1" height="1" fill="#ffffff"/><rect x="0" y="4" width="1" height="1" fill="#a0a0a0"/><rect x="1" y="4" width="1" height="1" fill="#696969"/><rect x="2" y="4" width="8" height="1" fill="#ffffff"/><rect x="10" y="4" width="1" height="1" fill="#e3e3e3"/><rect x="11" y="4" width="1" height="1" fill="#ffffff"/><rect x="0" y="5" width="1" height="1" fill="#a0a0a0"/><rect x="1" y="5" width="1" height="1" fill="#696969"/><rect x="2" y="5" width="8" height="1" fill="#ffffff"/><rect x="10" y="5" width="1" height="1" fill="#e3e3e3"/><rect x="11" y="5" width="1" height="1" fill="#ffffff"/><rect x="0" y="6" width="1" height="1" fill="#a0a0a0"/><rect x="1" y="6" width="1" height="1" fill="#696969"/><rect x="2" y="6" width="8" height="1" fill="#ffffff"/><rect x="10" y="6" width="1" height="1" fill="#e3e3e3"/><rect x="11" y="6" width="1" height="1" fill="#ffffff"/><rect x="0" y="7" width="1" height="1" fill="#a0a0a0"/><rect x="1" y="7" width="1" height="1" fill="#696969"/><rect x="2" y="7" width="8" height="1" fill="#ffffff"/><rect x="10" y="7" width="1" height="1" fill="#e3e3e3"/><rect x="11" y="7" width="1" height="1" fill="#ffffff"/><rect x="1" y="8" width="1" height="1" fill="#a0a0a0"/><rect x="2" y="8" width="1" height="1" fill="#696969"/><rect x="3" y="8" width="6" height="1" fill="#ffffff"/><rect x="9" y="8" width="1" height="1" fill="#e3e3e3"/><rect x="10" y="8" width="1" height="1" fill="#ffffff"/><rect x="1" y="9" width="1" height="1" fill="#a0a0a0"/><rect x="2" y="9" width="2" height="1" fill="#e3e3e3"/><rect x="4" y="9" width="4" height="1" fill="#ffffff"/><rect x="8" y="9" width="2" height="1" fill="#e3e3e3"/><rect x="10" y="9" width="1" height="1" fill="#ffffff"/><rect x="2" y="10" width="2" height="1" fill="#ffffff"/><rect x="4" y="10" width="4" height="1" fill="#e3e3e3"/><rect x="8" y="10" width="2" height="1" fill="#ffffff"/><rect x="4" y="11" width="4" height="1" fill="#ffffff"/><rect x="5" y="4" width="2" height="1" fill="#000000"/><rect x="4" y="5" width="4" height="1" fill="#000000"/><rect x="4" y="6" width="4" height="1" fill="#000000"/><rect x="5" y="7" width="2" height="1" fill="#000000"/></svg><div class="b" style="left:94px;top:37px;width:45px;height:20px;line-height:18px;"></div><svg class="px" style="left:12px;top:61px" width="12" height="12"><rect x="4" y="0" width="4" height="1" fill="#a0a0a0"/><rect x="2" y="1" width="2" height="1" fill="#a0a0a0"/><rect x="4" y="1" width="4" height="1" fill="#696969"/><rect x="8" y="1" width="2" height="1" fill="#a0a0a0"/><rect x="1" y="2" width="1" height="1" fill="#a0a0a0"/><rect x="2" y="2" width="2" height="1" fill="#696969"/><rect x="4" y="2" width="4" height="1" fill="#ffffff"/><rect x="8" y="2" width="2" height="1" fill="#696969"/><rect x="10" y="2" width="1" height="1" fill="#e3e3e3"/><rect x="1" y="3" width="1" height="1" fill="#a0a0a0"/><rect x="2" y="3" width="1" height="1" fill="#696969"/><rect x="3" y="3" width="6" height="1" fill="#ffffff"/><rect x="9" y="3" width="1" height="1" fill="#e3e3e3"/><rect x="10" y="3" width="1" height="1" fill="#ffffff"/><rect x="0" y="4" width="1" height="1" fill="#a0a0a0"/><rect x="1" y="4" width="1" height="1" fill="#696969"/><rect x="2" y="4" width="8" height="1" fill="#ffffff"/><rect x="10" y="4" width="1" height="1" fill="#e3e3e3"/><rect x="11" y="4" width="1" height="1" fill="#ffffff"/><rect x="0" y="5" width="1" height="1" fill="#a0a0a0"/><rect x="1" y="5" width="1" height="1" fill="#696969"/><rect x="2" y="5" width="8" height="1" fill="#ffffff"/><rect x="10" y="5" width="1" height="1" fill="#e3e3e3"/><rect x="11" y="5" width="1" height="1" fill="#ffffff"/><rect x="0" y="6" width="1" height="1" fill="#a0a0a0"/><rect x="1" y="6" width="1" height="1" fill="#696969"/><rect x="2" y="6" width="8" height="1" fill="#ffffff"/><rect x="10" y="6" width="1" height="1" fill="#e3e3e3"/><rect x="11" y="6" width="1" height="1" fill="#ffffff"/><rect x="0" y="7" width="1" height="1" fill="#a0a0a0"/><rect x="1" y="7" width="1" height="1" fill="#696969"/><rect x="2" y="7" width="8" height="1" fill="#ffffff"/><rect x="10" y="7" width="1" height="1" fill="#e3e3e3"/><rect x="11" y="7" width="1" height="1" fill="#ffffff"/><rect x="1" y="8" width="1" height="1" fill="#a0a0a0"/><rect x="2" y="8" width="1" height="1" fill="#696969"/><rect x="3" y="8" width="6" height="1" fill="#ffffff"/><rect x="9" y="8" width="1" height="1" fill="#e3e3e3"/><rect x="10" y="8" width="1" height="1" fill="#ffffff"/><rect x="1" y="9" width="1" height="1" fill="#a0a0a0"/><rect x="2" y="9" width="2" height="1" fill="#e3e3e3"/><rect x="4" y="9" width="4" height="1" fill="#ffffff"/><rect x="8" y="9" width="2" height="1" fill="#e3e3e3"/><rect x="10" y="9" width="1" height="1" fill="#ffffff"/><rect x="2" y="10" width="2" height="1" fill="#ffffff"/><rect x="4" y="10" width="4" height="1" fill="#e3e3e3"/><rect x="8" y="10" width="2" height="1" fill="#ffffff"/><rect x="4" y="11" width="4" height="1" fill="#ffffff"/></svg><div class="b" style="left:94px;top:57px;width:45px;height:20px;line-height:18px;"></div><svg class="px" style="left:12px;top:81px" width="12" height="12"><rect x="4" y="0" width="4" height="1" fill="#a0a0a0"/><rect x="2" y="1" width="2" height="1" fill="#a0a0a0"/><rect x="4" y="1" width="4" height="1" fill="#696969"/><rect x="8" y="1" width="2" height="1" fill="#a0a0a0"/><rect x="1" y="2" width="1" height="1" fill="#a0a0a0"/><rect x="2" y="2" width="2" height="1" fill="#696969"/><rect x="4" y="2" width="4" height="1" fill="#ffffff"/><rect x="8" y="2" width="2" height="1" fill="#696969"/><rect x="10" y="2" width="1" height="1" fill="#e3e3e3"/><rect x="1" y="3" width="1" height="1" fill="#a0a0a0"/><rect x="2" y="3" width="1" height="1" fill="#696969"/><rect x="3" y="3" width="6" height="1" fill="#ffffff"/><rect x="9" y="3" width="1" height="1" fill="#e3e3e3"/><rect x="10" y="3" width="1" height="1" fill="#ffffff"/><rect x="0" y="4" width="1" height="1" fill="#a0a0a0"/><rect x="1" y="4" width="1" height="1" fill="#696969"/><rect x="2" y="4" width="8" height="1" fill="#ffffff"/><rect x="10" y="4" width="1" height="1" fill="#e3e3e3"/><rect x="11" y="4" width="1" height="1" fill="#ffffff"/><rect x="0" y="5" width="1" height="1" fill="#a0a0a0"/><rect x="1" y="5" width="1" height="1" fill="#696969"/><rect x="2" y="5" width="8" height="1" fill="#ffffff"/><rect x="10" y="5" width="1" height="1" fill="#e3e3e3"/><rect x="11" y="5" width="1" height="1" fill="#ffffff"/><rect x="0" y="6" width="1" height="1" fill="#a0a0a0"/><rect x="1" y="6" width="1" height="1" fill="#696969"/><rect x="2" y="6" width="8" height="1" fill="#ffffff"/><rect x="10" y="6" width="1" height="1" fill="#e3e3e3"/><rect x="11" y="6" width="1" height="1" fill="#ffffff"/><rect x="0" y="7" width="1" height="1" fill="#a0a0a0"/><rect x="1" y="7" width="1" height="1" fill="#696969"/><rect x="2" y="7" width="8" height="1" fill="#ffffff"/><rect x="10" y="7" width="1" height="1" fill="#e3e3e3"/><rect x="11" y="7" width="1" height="1" fill="#ffffff"/><rect x="1" y="8" width="1" height="1" fill="#a0a0a0"/><rect x="2" y="8" width="1" height="1" fill="#696969"/><rect x="3" y="8" width="6" height="1" fill="#ffffff"/><rect x="9" y="8" width="1" height="1" fill="#e3e3e3"/><rect x="10" y="8" width="1" height="1" fill="#ffffff"/><rect x="1" y="9" width="1" height="1" fill="#a0a0a0"/><rect x="2" y="9" width="2" height="1" fill="#e3e3e3"/><rect x="4" y="9" width="4" height="1" fill="#ffffff"/><rect x="8" y="9" width="2" height="1" fill="#e3e3e3"/><rect x="10" y="9" width="1" height="1" fill="#ffffff"/><rect x="2" y="10" width="2" height="1" fill="#ffffff"/><rect x="4" y="10" width="4" height="1" fill="#e3e3e3"/><rect x="8" y="10" width="2" height="1" fill="#ffffff"/><rect x="4" y="11" width="4" height="1" fill="#ffffff"/></svg><div class="b" style="left:94px;top:77px;width:45px;height:20px;line-height:18px;"></div><svg class="px" style="left:12px;top:166px" width="13" height="13"><rect x="0" y="0" width="12" height="1" fill="#a0a0a0"/><rect x="12" y="0" width="1" height="1" fill="#ffffff"/><rect x="0" y="1" width="1" height="1" fill="#a0a0a0"/><rect x="1" y="1" width="10" height="1" fill="#696969"/><rect x="11" y="1" width="1" height="1" fill="#e3e3e3"/><rect x="12" y="1" width="1" height="1" fill="#ffffff"/><rect x="0" y="2" width="1" height="1" fill="#a0a0a0"/><rect x="1" y="2" width="1" height="1" fill="#696969"/><rect x="2" y="2" width="9" height="1" fill="#ffffff"/><rect x="11" y="2" width="1" height="1" fill="#e3e3e3"/><rect x="12" y="2" width="1" height="1" fill="#ffffff"/><rect x="0" y="3" width="1" height="1" fill="#a0a0a0"/><rect x="1" y="3" width="1" height="1" fill="#696969"/><rect x="2" y="3" width="7" height="1" fill="#ffffff"/><rect x="9" y="3" width="1" height="1" fill="#000000"/><rect x="10" y="3" width="1" height="1" fill="#ffffff"/><rect x="11" y="3" width="1" height="1" fill="#e3e3e3"/><rect x="12" y="3" width="1" height="1" fill="#ffffff"/><rect x="0" y="4" width="1" height="1" fill="#a0a0a0"/><rect x="1" y="4" width="1" height="1" fill="#696969"/><rect x="2" y="4" width="6" height="1" fill="#ffffff"/><rect x="8" y="4" width="2" height="1" fill="#000000"/><rect x="10" y="4" width="1" height="1" fill="#ffffff"/><rect x="11" y="4" width="1" height="1" fill="#e3e3e3"/><rect x="12" y="4" width="1" height="1" fill="#ffffff"/><rect x="0" y="5" width="1" height="1" fill="#a0a0a0"/><rect x="1" y="5" width="1" height="1" fill="#696969"/><rect x="2" y="5" width="1" height="1" fill="#ffffff"/><rect x="3" y="5" width="1" height="1" fill="#000000"/><rect x="4" y="5" width="3" height="1" fill="#ffffff"/><rect x="7" y="5" width="3" height="1" fill="#000000"/><rect x="10" y="5" width="1" height="1" fill="#ffffff"/><rect x="11" y="5" width="1" height="1" fill="#e3e3e3"/><rect x="12" y="5" width="1" height="1" fill="#ffffff"/><rect x="0" y="6" width="1" height="1" fill="#a0a0a0"/><rect x="1" y="6" width="1" height="1" fill="#696969"/><rect x="2" y="6" width="1" height="1" fill="#ffffff"/><rect x="3" y="6" width="2" height="1" fill="#000000"/><rect x="5" y="6" width="1" height="1" fill="#ffffff"/><rect x="6" y="6" width="3" height="1" fill="#000000"/><rect x="9" y="6" width="2" height="1" fill="#ffffff"/><rect x="11" y="6" width="1" height="1" fill="#e3e3e3"/><rect x="12" y="6" width="1" height="1" fill="#ffffff"/><rect x="0" y="7" width="1" height="1" fill="#a0a0a0"/><rect x="1" y="7" width="1" height="1" fill="#696969"/><rect x="2" y="7" width="1" height="1" fill="#ffffff"/><rect x="3" y="7" width="5" height="1" fill="#000000"/><rect x="8" y="7" width="3" height="1" fill="#ffffff"/><rect x="11" y="7" width="1" height="1" fill="#e3e3e3"/><rect x="12" y="7" width="1" height="1" fill="#ffffff"/><rect x="0" y="8" width="1" height="1" fill="#a0a0a0"/><rect x="1" y="8" width="1" height="1" fill="#696969"/><rect x="2" y="8" width="2" height="1" fill="#ffffff"/><rect x="4" y="8" width="3" height="1" fill="#000000"/><rect x="7" y="8" width="4" height="1" fill="#ffffff"/><rect x="11" y="8" width="1" height="1" fill="#e3e3e3"/><rect x="12" y="8" width="1" height="1" fill="#ffffff"/><rect x="0" y="9" width="1" height="1" fill="#a0a0a0"/><rect x="1" y="9" width="1" height="1" fill="#696969"/><rect x="2" y="9" width="3" height="1" fill="#ffffff"/><rect x="5" y="9" width="1" height="1" fill="#000000"/><rect x="6" y="9" width="5" height="1" fill="#ffffff"/><rect x="11" y="9" width="1" height="1" fill="#e3e3e3"/><rect x="12" y="9" width="1" height="1" fill="#ffffff"/><rect x="0" y="10" width="1" height="1" fill="#a0a0a0"/><rect x="1" y="10" width="1" height="1" fill="#696969"/><rect x="2" y="10" width="9" height="1" fill="#ffffff"/><rect x="11" y="10" width="1" height="1" fill="#e3e3e3"/><rect x="12" y="10" width="1" height="1" fill="#ffffff"/><rect x="0" y="11" width="1" height="1" fill="#a0a0a0"/><rect x="1" y="11" width="11" height="1" fill="#e3e3e3"/><rect x="12" y="11" width="1" height="1" fill="#ffffff"/><rect x="0" y="12" width="13" height="1" fill="#ffffff"/></svg><svg class="px" style="left:12px;top:186px" width="13" height="13"><rect x="0" y="0" width="12" height="1" fill="#a0a0a0"/><rect x="12" y="0" width="1" height="1" fill="#ffffff"/><rect x="0" y="1" width="1" height="1" fill="#a0a0a0"/><rect x="1" y="1" width="10" height="1" fill="#696969"/><rect x="11" y="1" width="1" height="1" fill="#e3e3e3"/><rect x="12" y="1" width="1" height="1" fill="#ffffff"/><rect x="0" y="2" width="1" height="1" fill="#a0a0a0"/><rect x="1" y="2" width="1" height="1" fill="#696969"/><rect x="2" y="2" width="9" height="1" fill="#ffffff"/><rect x="11" y="2" width="1" height="1" fill="#e3e3e3"/><rect x="12" y="2" width="1" height="1" fill="#ffffff"/><rect x="0" y="3" width="1" height="1" fill="#a0a0a0"/><rect x="1" y="3" width="1" height="1" fill="#696969"/><rect x="2" y="3" width="7" height="1" fill="#ffffff"/><rect x="9" y="3" width="1" height="1" fill="#000000"/><rect x="10" y="3" width="1" height="1" fill="#ffffff"/><rect x="11" y="3" width="1" height="1" fill="#e3e3e3"/><rect x="12" y="3" width="1" height="1" fill="#ffffff"/><rect x="0" y="4" width="1" height="1" fill="#a0a0a0"/><rect x="1" y="4" width="1" height="1" fill="#696969"/><rect x="2" y="4" width="6" height="1" fill="#ffffff"/><rect x="8" y="4" width="2" height="1" fill="#000000"/><rect x="10" y="4" width="1" height="1" fill="#ffffff"/><rect x="11" y="4" width="1" height="1" fill="#e3e3e3"/><rect x="12" y="4" width="1" height="1" fill="#ffffff"/><rect x="0" y="5" width="1" height="1" fill="#a0a0a0"/><rect x="1" y="5" width="1" height="1" fill="#696969"/><rect x="2" y="5" width="1" height="1" fill="#ffffff"/><rect x="3" y="5" width="1" height="1" fill="#000000"/><rect x="4" y="5" width="3" height="1" fill="#ffffff"/><rect x="7" y="5" width="3" height="1" fill="#000000"/><rect x="10" y="5" width="1" height="1" fill="#ffffff"/><rect x="11" y="5" width="1" height="1" fill="#e3e3e3"/><rect x="12" y="5" width="1" height="1" fill="#ffffff"/><rect x="0" y="6" width="1" height="1" fill="#a0a0a0"/><rect x="1" y="6" width="1" height="1" fill="#696969"/><rect x="2" y="6" width="1" height="1" fill="#ffffff"/><rect x="3" y="6" width="2" height="1" fill="#000000"/><rect x="5" y="6" width="1" height="1" fill="#ffffff"/><rect x="6" y="6" width="3" height="1" fill="#000000"/><rect x="9" y="6" width="2" height="1" fill="#ffffff"/><rect x="11" y="6" width="1" height="1" fill="#e3e3e3"/><rect x="12" y="6" width="1" height="1" fill="#ffffff"/><rect x="0" y="7" width="1" height="1" fill="#a0a0a0"/><rect x="1" y="7" width="1" height="1" fill="#696969"/><rect x="2" y="7" width="1" height="1" fill="#ffffff"/><rect x="3" y="7" width="5" height="1" fill="#000000"/><rect x="8" y="7" width="3" height="1" fill="#ffffff"/><rect x="11" y="7" width="1" height="1" fill="#e3e3e3"/><rect x="12" y="7" width="1" height="1" fill="#ffffff"/><rect x="0" y="8" width="1" height="1" fill="#a0a0a0"/><rect x="1" y="8" width="1" height="1" fill="#696969"/><rect x="2" y="8" width="2" height="1" fill="#ffffff"/><rect x="4" y="8" width="3" height="1" fill="#000000"/><rect x="7" y="8" width="4" height="1" fill="#ffffff"/><rect x="11" y="8" width="1" height="1" fill="#e3e3e3"/><rect x="12" y="8" width="1" height="1" fill="#ffffff"/><rect x="0" y="9" width="1" height="1" fill="#a0a0a0"/><rect x="1" y="9" width="1" height="1" fill="#696969"/><rect x="2" y="9" width="3" height="1" fill="#ffffff"/><rect x="5" y="9" width="1" height="1" fill="#000000"/><rect x="6" y="9" width="5" height="1" fill="#ffffff"/><rect x="11" y="9" width="1" height="1" fill="#e3e3e3"/><rect x="12" y="9" width="1" height="1" fill="#ffffff"/><rect x="0" y="10" width="1" height="1" fill="#a0a0a0"/><rect x="1" y="10" width="1" height="1" fill="#696969"/><rect x="2" y="10" width="9" height="1" fill="#ffffff"/><rect x="11" y="10" width="1" height="1" fill="#e3e3e3"/><rect x="12" y="10" width="1" height="1" fill="#ffffff"/><rect x="0" y="11" width="1" height="1" fill="#a0a0a0"/><rect x="1" y="11" width="11" height="1" fill="#e3e3e3"/><rect x="12" y="11" width="1" height="1" fill="#ffffff"/><rect x="0" y="12" width="13" height="1" fill="#ffffff"/></svg><svg class="px" style="left:12px;top:206px" width="13" height="13"><rect x="0" y="0" width="12" height="1" fill="#a0a0a0"/><rect x="12" y="0" width="1" height="1" fill="#ffffff"/><rect x="0" y="1" width="1" height="1" fill="#a0a0a0"/><rect x="1" y="1" width="10" height="1" fill="#696969"/><rect x="11" y="1" width="1" height="1" fill="#e3e3e3"/><rect x="12" y="1" width="1" height="1" fill="#ffffff"/><rect x="0" y="2" width="1" height="1" fill="#a0a0a0"/><rect x="1" y="2" width="1" height="1" fill="#696969"/><rect x="2" y="2" width="9" height="1" fill="#ffffff"/><rect x="11" y="2" width="1" height="1" fill="#e3e3e3"/><rect x="12" y="2" width="1" height="1" fill="#ffffff"/><rect x="0" y="3" width="1" height="1" fill="#a0a0a0"/><rect x="1" y="3" width="1" height="1" fill="#696969"/><rect x="2" y="3" width="7" height="1" fill="#ffffff"/><rect x="9" y="3" width="1" height="1" fill="#000000"/><rect x="10" y="3" width="1" height="1" fill="#ffffff"/><rect x="11" y="3" width="1" height="1" fill="#e3e3e3"/><rect x="12" y="3" width="1" height="1" fill="#ffffff"/><rect x="0" y="4" width="1" height="1" fill="#a0a0a0"/><rect x="1" y="4" width="1" height="1" fill="#696969"/><rect x="2" y="4" width="6" height="1" fill="#ffffff"/><rect x="8" y="4" width="2" height="1" fill="#000000"/><rect x="10" y="4" width="1" height="1" fill="#ffffff"/><rect x="11" y="4" width="1" height="1" fill="#e3e3e3"/><rect x="12" y="4" width="1" height="1" fill="#ffffff"/><rect x="0" y="5" width="1" height="1" fill="#a0a0a0"/><rect x="1" y="5" width="1" height="1" fill="#696969"/><rect x="2" y="5" width="1" height="1" fill="#ffffff"/><rect x="3" y="5" width="1" height="1" fill="#000000"/><rect x="4" y="5" width="3" height="1" fill="#ffffff"/><rect x="7" y="5" width="3" height="1" fill="#000000"/><rect x="10" y="5" width="1" height="1" fill="#ffffff"/><rect x="11" y="5" width="1" height="1" fill="#e3e3e3"/><rect x="12" y="5" width="1" height="1" fill="#ffffff"/><rect x="0" y="6" width="1" height="1" fill="#a0a0a0"/><rect x="1" y="6" width="1" height="1" fill="#696969"/><rect x="2" y="6" width="1" height="1" fill="#ffffff"/><rect x="3" y="6" width="2" height="1" fill="#000000"/><rect x="5" y="6" width="1" height="1" fill="#ffffff"/><rect x="6" y="6" width="3" height="1" fill="#000000"/><rect x="9" y="6" width="2" height="1" fill="#ffffff"/><rect x="11" y="6" width="1" height="1" fill="#e3e3e3"/><rect x="12" y="6" width="1" height="1" fill="#ffffff"/><rect x="0" y="7" width="1" height="1" fill="#a0a0a0"/><rect x="1" y="7" width="1" height="1" fill="#696969"/><rect x="2" y="7" width="1" height="1" fill="#ffffff"/><rect x="3" y="7" width="5" height="1" fill="#000000"/><rect x="8" y="7" width="3" height="1" fill="#ffffff"/><rect x="11" y="7" width="1" height="1" fill="#e3e3e3"/><rect x="12" y="7" width="1" height="1" fill="#ffffff"/><rect x="0" y="8" width="1" height="1" fill="#a0a0a0"/><rect x="1" y="8" width="1" height="1" fill="#696969"/><rect x="2" y="8" width="2" height="1" fill="#ffffff"/><rect x="4" y="8" width="3" height="1" fill="#000000"/><rect x="7" y="8" width="4" height="1" fill="#ffffff"/><rect x="11" y="8" width="1" height="1" fill="#e3e3e3"/><rect x="12" y="8" width="1" height="1" fill="#ffffff"/><rect x="0" y="9" width="1" height="1" fill="#a0a0a0"/><rect x="1" y="9" width="1" height="1" fill="#696969"/><rect x="2" y="9" width="3" height="1" fill="#ffffff"/><rect x="5" y="9" width="1" height="1" fill="#000000"/><rect x="6" y="9" width="5" height="1" fill="#ffffff"/><rect x="11" y="9" width="1" height="1" fill="#e3e3e3"/><rect x="12" y="9" width="1" height="1" fill="#ffffff"/><rect x="0" y="10" width="1" height="1" fill="#a0a0a0"/><rect x="1" y="10" width="1" height="1" fill="#696969"/><rect x="2" y="10" width="9" height="1" fill="#ffffff"/><rect x="11" y="10" width="1" height="1" fill="#e3e3e3"/><rect x="12" y="10" width="1" height="1" fill="#ffffff"/><rect x="0" y="11" width="1" height="1" fill="#a0a0a0"/><rect x="1" y="11" width="11" height="1" fill="#e3e3e3"/><rect x="12" y="11" width="1" height="1" fill="#ffffff"/><rect x="0" y="12" width="13" height="1" fill="#ffffff"/></svg><svg class="px" style="left:12px;top:226px" width="13" height="13"><rect x="0" y="0" width="12" height="1" fill="#a0a0a0"/><rect x="12" y="0" width="1" height="1" fill="#ffffff"/><rect x="0" y="1" width="1" height="1" fill="#a0a0a0"/><rect x="1" y="1" width="10" height="1" fill="#696969"/><rect x="11" y="1" width="1" height="1" fill="#e3e3e3"/><rect x="12" y="1" width="1" height="1" fill="#ffffff"/><rect x="0" y="2" width="1" height="1" fill="#a0a0a0"/><rect x="1" y="2" width="1" height="1" fill="#696969"/><rect x="2" y="2" width="9" height="1" fill="#ffffff"/><rect x="11" y="2" width="1" height="1" fill="#e3e3e3"/><rect x="12" y="2" width="1" height="1" fill="#ffffff"/><rect x="0" y="3" width="1" height="1" fill="#a0a0a0"/><rect x="1" y="3" width="1" height="1" fill="#696969"/><rect x="2" y="3" width="7" height="1" fill="#ffffff"/><rect x="9" y="3" width="1" height="1" fill="#000000"/><rect x="10" y="3" width="1" height="1" fill="#ffffff"/><rect x="11" y="3" width="1" height="1" fill="#e3e3e3"/><rect x="12" y="3" width="1" height="1" fill="#ffffff"/><rect x="0" y="4" width="1" height="1" fill="#a0a0a0"/><rect x="1" y="4" width="1" height="1" fill="#696969"/><rect x="2" y="4" width="6" height="1" fill="#ffffff"/><rect x="8" y="4" width="2" height="1" fill="#000000"/><rect x="10" y="4" width="1" height="1" fill="#ffffff"/><rect x="11" y="4" width="1" height="1" fill="#e3e3e3"/><rect x="12" y="4" width="1" height="1" fill="#ffffff"/><rect x="0" y="5" width="1" height="1" fill="#a0a0a0"/><rect x="1" y="5" width="1" height="1" fill="#696969"/><rect x="2" y="5" width="1" height="1" fill="#ffffff"/><rect x="3" y="5" width="1" height="1" fill="#000000"/><rect x="4" y="5" width="3" height="1" fill="#ffffff"/><rect x="7" y="5" width="3" height="1" fill="#000000"/><rect x="10" y="5" width="1" height="1" fill="#ffffff"/><rect x="11" y="5" width="1" height="1" fill="#e3e3e3"/><rect x="12" y="5" width="1" height="1" fill="#ffffff"/><rect x="0" y="6" width="1" height="1" fill="#a0a0a0"/><rect x="1" y="6" width="1" height="1" fill="#696969"/><rect x="2" y="6" width="1" height="1" fill="#ffffff"/><rect x="3" y="6" width="2" height="1" fill="#000000"/><rect x="5" y="6" width="1" height="1" fill="#ffffff"/><rect x="6" y="6" width="3" height="1" fill="#000000"/><rect x="9" y="6" width="2" height="1" fill="#ffffff"/><rect x="11" y="6" width="1" height="1" fill="#e3e3e3"/><rect x="12" y="6" width="1" height="1" fill="#ffffff"/><rect x="0" y="7" width="1" height="1" fill="#a0a0a0"/><rect x="1" y="7" width="1" height="1" fill="#696969"/><rect x="2" y="7" width="1" height="1" fill="#ffffff"/><rect x="3" y="7" width="5" height="1" fill="#000000"/><rect x="8" y="7" width="3" height="1" fill="#ffffff"/><rect x="11" y="7" width="1" height="1" fill="#e3e3e3"/><rect x="12" y="7" width="1" height="1" fill="#ffffff"/><rect x="0" y="8" width="1" height="1" fill="#a0a0a0"/><rect x="1" y="8" width="1" height="1" fill="#696969"/><rect x="2" y="8" width="2" height="1" fill="#ffffff"/><rect x="4" y="8" width="3" height="1" fill="#000000"/><rect x="7" y="8" width="4" height="1" fill="#ffffff"/><rect x="11" y="8" width="1" height="1" fill="#e3e3e3"/><rect x="12" y="8" width="1" height="1" fill="#ffffff"/><rect x="0" y="9" width="1" height="1" fill="#a0a0a0"/><rect x="1" y="9" width="1" height="1" fill="#696969"/><rect x="2" y="9" width="3" height="1" fill="#ffffff"/><rect x="5" y="9" width="1" height="1" fill="#000000"/><rect x="6" y="9" width="5" height="1" fill="#ffffff"/><rect x="11" y="9" width="1" height="1" fill="#e3e3e3"/><rect x="12" y="9" width="1" height="1" fill="#ffffff"/><rect x="0" y="10" width="1" height="1" fill="#a0a0a0"/><rect x="1" y="10" width="1" height="1" fill="#696969"/><rect x="2" y="10" width="9" height="1" fill="#ffffff"/><rect x="11" y="10" width="1" height="1" fill="#e3e3e3"/><rect x="12" y="10" width="1" height="1" fill="#ffffff"/><rect x="0" y="11" width="1" height="1" fill="#a0a0a0"/><rect x="1" y="11" width="11" height="1" fill="#e3e3e3"/><rect x="12" y="11" width="1" height="1" fill="#ffffff"/><rect x="0" y="12" width="13" height="1" fill="#ffffff"/></svg><svg class="px" style="left:12px;top:246px" width="13" height="13"><rect x="0" y="0" width="12" height="1" fill="#a0a0a0"/><rect x="12" y="0" width="1" height="1" fill="#ffffff"/><rect x="0" y="1" width="1" height="1" fill="#a0a0a0"/><rect x="1" y="1" width="10" height="1" fill="#696969"/><rect x="11" y="1" width="1" height="1" fill="#e3e3e3"/><rect x="12" y="1" width="1" height="1" fill="#ffffff"/><rect x="0" y="2" width="1" height="1" fill="#a0a0a0"/><rect x="1" y="2" width="1" height="1" fill="#696969"/><rect x="2" y="2" width="9" height="1" fill="#ffffff"/><rect x="11" y="2" width="1" height="1" fill="#e3e3e3"/><rect x="12" y="2" width="1" height="1" fill="#ffffff"/><rect x="0" y="3" width="1" height="1" fill="#a0a0a0"/><rect x="1" y="3" width="1" height="1" fill="#696969"/><rect x="2" y="3" width="7" height="1" fill="#ffffff"/><rect x="9" y="3" width="1" height="1" fill="#000000"/><rect x="10" y="3" width="1" height="1" fill="#ffffff"/><rect x="11" y="3" width="1" height="1" fill="#e3e3e3"/><rect x="12" y="3" width="1" height="1" fill="#ffffff"/><rect x="0" y="4" width="1" height="1" fill="#a0a0a0"/><rect x="1" y="4" width="1" height="1" fill="#696969"/><rect x="2" y="4" width="6" height="1" fill="#ffffff"/><rect x="8" y="4" width="2" height="1" fill="#000000"/><rect x="10" y="4" width="1" height="1" fill="#ffffff"/><rect x="11" y="4" width="1" height="1" fill="#e3e3e3"/><rect x="12" y="4" width="1" height="1" fill="#ffffff"/><rect x="0" y="5" width="1" height="1" fill="#a0a0a0"/><rect x="1" y="5" width="1" height="1" fill="#696969"/><rect x="2" y="5" width="1" height="1" fill="#ffffff"/><rect x="3" y="5" width="1" height="1" fill="#000000"/><rect x="4" y="5" width="3" height="1" fill="#ffffff"/><rect x="7" y="5" width="3" height="1" fill="#000000"/><rect x="10" y="5" width="1" height="1" fill="#ffffff"/><rect x="11" y="5" width="1" height="1" fill="#e3e3e3"/><rect x="12" y="5" width="1" height="1" fill="#ffffff"/><rect x="0" y="6" width="1" height="1" fill="#a0a0a0"/><rect x="1" y="6" width="1" height="1" fill="#696969"/><rect x="2" y="6" width="1" height="1" fill="#ffffff"/><rect x="3" y="6" width="2" height="1" fill="#000000"/><rect x="5" y="6" width="1" height="1" fill="#ffffff"/><rect x="6" y="6" width="3" height="1" fill="#000000"/><rect x="9" y="6" width="2" height="1" fill="#ffffff"/><rect x="11" y="6" width="1" height="1" fill="#e3e3e3"/><rect x="12" y="6" width="1" height="1" fill="#ffffff"/><rect x="0" y="7" width="1" height="1" fill="#a0a0a0"/><rect x="1" y="7" width="1" height="1" fill="#696969"/><rect x="2" y="7" width="1" height="1" fill="#ffffff"/><rect x="3" y="7" width="5" height="1" fill="#000000"/><rect x="8" y="7" width="3" height="1" fill="#ffffff"/><rect x="11" y="7" width="1" height="1" fill="#e3e3e3"/><rect x="12" y="7" width="1" height="1" fill="#ffffff"/><rect x="0" y="8" width="1" height="1" fill="#a0a0a0"/><rect x="1" y="8" width="1" height="1" fill="#696969"/><rect x="2" y="8" width="2" height="1" fill="#ffffff"/><rect x="4" y="8" width="3" height="1" fill="#000000"/><rect x="7" y="8" width="4" height="1" fill="#ffffff"/><rect x="11" y="8" width="1" height="1" fill="#e3e3e3"/><rect x="12" y="8" width="1" height="1" fill="#ffffff"/><rect x="0" y="9" width="1" height="1" fill="#a0a0a0"/><rect x="1" y="9" width="1" height="1" fill="#696969"/><rect x="2" y="9" width="3" height="1" fill="#ffffff"/><rect x="5" y="9" width="1" height="1" fill="#000000"/><rect x="6" y="9" width="5" height="1" fill="#ffffff"/><rect x="11" y="9" width="1" height="1" fill="#e3e3e3"/><rect x="12" y="9" width="1" height="1" fill="#ffffff"/><rect x="0" y="10" width="1" height="1" fill="#a0a0a0"/><rect x="1" y="10" width="1" height="1" fill="#696969"/><rect x="2" y="10" width="9" height="1" fill="#ffffff"/><rect x="11" y="10" width="1" height="1" fill="#e3e3e3"/><rect x="12" y="10" width="1" height="1" fill="#ffffff"/><rect x="0" y="11" width="1" height="1" fill="#a0a0a0"/><rect x="1" y="11" width="11" height="1" fill="#e3e3e3"/><rect x="12" y="11" width="1" height="1" fill="#ffffff"/><rect x="0" y="12" width="13" height="1" fill="#ffffff"/></svg><div class="b" style="left:21px;top:275px;width:100px;height:30px;line-height:28px;"></div><svg class="px" style="left:12px;top:376px" width="12" height="12"><rect x="4" y="0" width="4" height="1" fill="#a0a0a0"/><rect x="2" y="1" width="2" height="1" fill="#a0a0a0"/><rect x="4" y="1" width="4" height="1" fill="#696969"/><rect x="8" y="1" width="2" height="1" fill="#a0a0a0"/><rect x="1" y="2" width="1" height="1" fill="#a0a0a0"/><rect x="2" y="2" width="2" height="1" fill="#696969"/><rect x="4" y="2" width="4" height="1" fill="#ffffff"/><rect x="8" y="2" width="2" height="1" fill="#696969"/><rect x="10" y="2" width="1" height="1" fill="#e3e3e3"/><rect x="1" y="3" width="1" height="1" fill="#a0a0a0"/><rect x="2" y="3" width="1" height="1" fill="#696969"/><rect x="3" y="3" width="6" height="1" fill="#ffffff"/><rect x="9" y="3" width="1" height="1" fill="#e3e3e3"/><rect x="10" y="3" width="1" height="1" fill="#ffffff"/><rect x="0" y="4" width="1" height="1" fill="#a0a0a0"/><rect x="1" y="4" width="1" height="1" fill="#696969"/><rect x="2" y="4" width="8" height="1" fill="#ffffff"/><rect x="10" y="4" width="1" height="1" fill="#e3e3e3"/><rect x="11" y="4" width="1" height="1" fill="#ffffff"/><rect x="0" y="5" width="1" height="1" fill="#a0a0a0"/><rect x="1" y="5" width="1" height="1" fill="#696969"/><rect x="2" y="5" width="8" height="1" fill="#ffffff"/><rect x="10" y="5" width="1" height="1" fill="#e3e3e3"/><rect x="11" y="5" width="1" height="1" fill="#ffffff"/><rect x="0" y="6" width="1" height="1" fill="#a0a0a0"/><rect x="1" y="6" width="1" height="1" fill="#696969"/><rect x="2" y="6" width="8" height="1" fill="#ffffff"/><rect x="10" y="6" width="1" height="1" fill="#e3e3e3"/><rect x="11" y="6" width="1" height="1" fill="#ffffff"/><rect x="0" y="7" width="1" height="1" fill="#a0a0a0"/><rect x="1" y="7" width="1" height="1" fill="#696969"/><rect x="2" y="7" width="8" height="1" fill="#ffffff"/><rect x="10" y="7" width="1" height="1" fill="#e3e3e3"/><rect x="11" y="7" width="1" height="1" fill="#ffffff"/><rect x="1" y="8" width="1" height="1" fill="#a0a0a0"/><rect x="2" y="8" width="1" height="1" fill="#696969"/><rect x="3" y="8" width="6" height="1" fill="#ffffff"/><rect x="9" y="8" width="1" height="1" fill="#e3e3e3"/><rect x="10" y="8" width="1" height="1" fill="#ffffff"/><rect x="1" y="9" width="1" height="1" fill="#a0a0a0"/><rect x="2" y="9" width="2" height="1" fill="#e3e3e3"/><rect x="4" y="9" width="4" height="1" fill="#ffffff"/><rect x="8" y="9" width="2" height="1" fill="#e3e3e3"/><rect x="10" y="9" width="1" height="1" fill="#ffffff"/><rect x="2" y="10" width="2" height="1" fill="#ffffff"/><rect x="4" y="10" width="4" height="1" fill="#e3e3e3"/><rect x="8" y="10" width="2" height="1" fill="#ffffff"/><rect x="4" y="11" width="4" height="1" fill="#ffffff"/></svg><svg class="px" style="left:12px;top:396px" width="12" height="12"><rect x="4" y="0" width="4" height="1" fill="#a0a0a0"/><rect x="2" y="1" width="2" height="1" fill="#a0a0a0"/><rect x="4" y="1" width="4" height="1" fill="#696969"/><rect x="8" y="1" width="2" height="1" fill="#a0a0a0"/><rect x="1" y="2" width="1" height="1" fill="#a0a0a0"/><rect x="2" y="2" width="2" height="1" fill="#696969"/><rect x="4" y="2" width="4" height="1" fill="#ffffff"/><rect x="8" y="2" width="2" height="1" fill="#696969"/><rect x="10" y="2" width="1" height="1" fill="#e3e3e3"/><rect x="1" y="3" width="1" height="1" fill="#a0a0a0"/><rect x="2" y="3" width="1" height="1" fill="#696969"/><rect x="3" y="3" width="6" height="1" fill="#ffffff"/><rect x="9" y="3" width="1" height="1" fill="#e3e3e3"/><rect x="10" y="3" width="1" height="1" fill="#ffffff"/><rect x="0" y="4" width="1" height="1" fill="#a0a0a0"/><rect x="1" y="4" width="1" height="1" fill="#696969"/><rect x="2" y="4" width="8" height="1" fill="#ffffff"/><rect x="10" y="4" width="1" height="1" fill="#e3e3e3"/><rect x="11" y="4" width="1" height="1" fill="#ffffff"/><rect x="0" y="5" width="1" height="1" fill="#a0a0a0"/><rect x="1" y="5" width="1" height="1" fill="#696969"/><rect x="2" y="5" width="8" height="1" fill="#ffffff"/><rect x="10" y="5" width="1" height="1" fill="#e3e3e3"/><rect x="11" y="5" width="1" height="1" fill="#ffffff"/><rect x="0" y="6" width="1" height="1" fill="#a0a0a0"/><rect x="1" y="6" width="1" height="1" fill="#696969"/><rect x="2" y="6" width="8" height="1" fill="#ffffff"/><rect x="10" y="6" width="1" height="1" fill="#e3e3e3"/><rect x="11" y="6" width="1" height="1" fill="#ffffff"/><rect x="0" y="7" width="1" height="1" fill="#a0a0a0"/><rect x="1" y="7" width="1" height="1" fill="#696969"/><rect x="2" y="7" width="8" height="1" fill="#ffffff"/><rect x="10" y="7" width="1" height="1" fill="#e3e3e3"/><rect x="11" y="7" width="1" height="1" fill="#ffffff"/><rect x="1" y="8" width="1" height="1" fill="#a0a0a0"/><rect x="2" y="8" width="1" height="1" fill="#696969"/><rect x="3" y="8" width="6" height="1" fill="#ffffff"/><rect x="9" y="8" width="1" height="1" fill="#e3e3e3"/><rect x="10" y="8" width="1" height="1" fill="#ffffff"/><rect x="1" y="9" width="1" height="1" fill="#a0a0a0"/><rect x="2" y="9" width="2" height="1" fill="#e3e3e3"/><rect x="4" y="9" width="4" height="1" fill="#ffffff"/><rect x="8" y="9" width="2" height="1" fill="#e3e3e3"/><rect x="10" y="9" width="1" height="1" fill="#ffffff"/><rect x="2" y="10" width="2" height="1" fill="#ffffff"/><rect x="4" y="10" width="4" height="1" fill="#e3e3e3"/><rect x="8" y="10" width="2" height="1" fill="#ffffff"/><rect x="4" y="11" width="4" height="1" fill="#ffffff"/></svg><svg class="px" style="left:12px;top:416px" width="12" height="12"><rect x="4" y="0" width="4" height="1" fill="#a0a0a0"/><rect x="2" y="1" width="2" height="1" fill="#a0a0a0"/><rect x="4" y="1" width="4" height="1" fill="#696969"/><rect x="8" y="1" width="2" height="1" fill="#a0a0a0"/><rect x="1" y="2" width="1" height="1" fill="#a0a0a0"/><rect x="2" y="2" width="2" height="1" fill="#696969"/><rect x="4" y="2" width="4" height="1" fill="#ffffff"/><rect x="8" y="2" width="2" height="1" fill="#696969"/><rect x="10" y="2" width="1" height="1" fill="#e3e3e3"/><rect x="1" y="3" width="1" height="1" fill="#a0a0a0"/><rect x="2" y="3" width="1" height="1" fill="#696969"/><rect x="3" y="3" width="6" height="1" fill="#ffffff"/><rect x="9" y="3" width="1" height="1" fill="#e3e3e3"/><rect x="10" y="3" width="1" height="1" fill="#ffffff"/><rect x="0" y="4" width="1" height="1" fill="#a0a0a0"/><rect x="1" y="4" width="1" height="1" fill="#696969"/><rect x="2" y="4" width="8" height="1" fill="#ffffff"/><rect x="10" y="4" width="1" height="1" fill="#e3e3e3"/><rect x="11" y="4" width="1" height="1" fill="#ffffff"/><rect x="0" y="5" width="1" height="1" fill="#a0a0a0"/><rect x="1" y="5" width="1" height="1" fill="#696969"/><rect x="2" y="5" width="8" height="1" fill="#ffffff"/><rect x="10" y="5" width="1" height="1" fill="#e3e3e3"/><rect x="11" y="5" width="1" height="1" fill="#ffffff"/><rect x="0" y="6" width="1" height="1" fill="#a0a0a0"/><rect x="1" y="6" width="1" height="1" fill="#696969"/><rect x="2" y="6" width="8" height="1" fill="#ffffff"/><rect x="10" y="6" width="1" height="1" fill="#e3e3e3"/><rect x="11" y="6" width="1" height="1" fill="#ffffff"/><rect x="0" y="7" width="1" height="1" fill="#a0a0a0"/><rect x="1" y="7" width="1" height="1" fill="#696969"/><rect x="2" y="7" width="8" height="1" fill="#ffffff"/><rect x="10" y="7" width="1" height="1" fill="#e3e3e3"/><rect x="11" y="7" width="1" height="1" fill="#ffffff"/><rect x="1" y="8" width="1" height="1" fill="#a0a0a0"/><rect x="2" y="8" width="1" height="1" fill="#696969"/><rect x="3" y="8" width="6" height="1" fill="#ffffff"/><rect x="9" y="8" width="1" height="1" fill="#e3e3e3"/><rect x="10" y="8" width="1" height="1" fill="#ffffff"/><rect x="1" y="9" width="1" height="1" fill="#a0a0a0"/><rect x="2" y="9" width="2" height="1" fill="#e3e3e3"/><rect x="4" y="9" width="4" height="1" fill="#ffffff"/><rect x="8" y="9" width="2" height="1" fill="#e3e3e3"/><rect x="10" y="9" width="1" height="1" fill="#ffffff"/><rect x="2" y="10" width="2" height="1" fill="#ffffff"/><rect x="4" y="10" width="4" height="1" fill="#e3e3e3"/><rect x="8" y="10" width="2" height="1" fill="#ffffff"/><rect x="4" y="11" width="4" height="1" fill="#ffffff"/></svg><svg class="px" style="left:12px;top:436px" width="12" height="12"><rect x="4" y="0" width="4" height="1" fill="#a0a0a0"/><rect x="2" y="1" width="2" height="1" fill="#a0a0a0"/><rect x="4" y="1" width="4" height="1" fill="#696969"/><rect x="8" y="1" width="2" height="1" fill="#a0a0a0"/><rect x="1" y="2" width="1" height="1" fill="#a0a0a0"/><rect x="2" y="2" width="2" height="1" fill="#696969"/><rect x="4" y="2" width="4" height="1" fill="#ffffff"/><rect x="8" y="2" width="2" height="1" fill="#696969"/><rect x="10" y="2" width="1" height="1" fill="#e3e3e3"/><rect x="1" y="3" width="1" height="1" fill="#a0a0a0"/><rect x="2" y="3" width="1" height="1" fill="#696969"/><rect x="3" y="3" width="6" height="1" fill="#ffffff"/><rect x="9" y="3" width="1" height="1" fill="#e3e3e3"/><rect x="10" y="3" width="1" height="1" fill="#ffffff"/><rect x="0" y="4" width="1" height="1" fill="#a0a0a0"/><rect x="1" y="4" width="1" height="1" fill="#696969"/><rect x="2" y="4" width="8" height="1" fill="#ffffff"/><rect x="10" y="4" width="1" height="1" fill="#e3e3e3"/><rect x="11" y="4" width="1" height="1" fill="#ffffff"/><rect x="0" y="5" width="1" height="1" fill="#a0a0a0"/><rect x="1" y="5" width="1" height="1" fill="#696969"/><rect x="2" y="5" width="8" height="1" fill="#ffffff"/><rect x="10" y="5" width="1" height="1" fill="#e3e3e3"/><rect x="11" y="5" width="1" height="1" fill="#ffffff"/><rect x="0" y="6" width="1" height="1" fill="#a0a0a0"/><rect x="1" y="6" width="1" height="1" fill="#696969"/><rect x="2" y="6" width="8" height="1" fill="#ffffff"/><rect x="10" y="6" width="1" height="1" fill="#e3e3e3"/><rect x="11" y="6" width="1" height="1" fill="#ffffff"/><rect x="0" y="7" width="1" height="1" fill="#a0a0a0"/><rect x="1" y="7" width="1" height="1" fill="#696969"/><rect x="2" y="7" width="8" height="1" fill="#ffffff"/><rect x="10" y="7" width="1" height="1" fill="#e3e3e3"/><rect x="11" y="7" width="1" height="1" fill="#ffffff"/><rect x="1" y="8" width="1" height="1" fill="#a0a0a0"/><rect x="2" y="8" width="1" height="1" fill="#696969"/><rect x="3" y="8" width="6" height="1" fill="#ffffff"/><rect x="9" y="8" width="1" height="1" fill="#e3e3e3"/><rect x="10" y="8" width="1" height="1" fill="#ffffff"/><rect x="1" y="9" width="1" height="1" fill="#a0a0a0"/><rect x="2" y="9" width="2" height="1" fill="#e3e3e3"/><rect x="4" y="9" width="4" height="1" fill="#ffffff"/><rect x="8" y="9" width="2" height="1" fill="#e3e3e3"/><rect x="10" y="9" width="1" height="1" fill="#ffffff"/><rect x="2" y="10" width="2" height="1" fill="#ffffff"/><rect x="4" y="10" width="4" height="1" fill="#e3e3e3"/><rect x="8" y="10" width="2" height="1" fill="#ffffff"/><rect x="4" y="11" width="4" height="1" fill="#ffffff"/></svg><svg class="px" style="left:12px;top:456px" width="12" height="12"><rect x="4" y="0" width="4" height="1" fill="#a0a0a0"/><rect x="2" y="1" width="2" height="1" fill="#a0a0a0"/><rect x="4" y="1" width="4" height="1" fill="#696969"/><rect x="8" y="1" width="2" height="1" fill="#a0a0a0"/><rect x="1" y="2" width="1" height="1" fill="#a0a0a0"/><rect x="2" y="2" width="2" height="1" fill="#696969"/><rect x="4" y="2" width="4" height="1" fill="#ffffff"/><rect x="8" y="2" width="2" height="1" fill="#696969"/><rect x="10" y="2" width="1" height="1" fill="#e3e3e3"/><rect x="1" y="3" width="1" height="1" fill="#a0a0a0"/><rect x="2" y="3" width="1" height="1" fill="#696969"/><rect x="3" y="3" width="6" height="1" fill="#ffffff"/><rect x="9" y="3" width="1" height="1" fill="#e3e3e3"/><rect x="10" y="3" width="1" height="1" fill="#ffffff"/><rect x="0" y="4" width="1" height="1" fill="#a0a0a0"/><rect x="1" y="4" width="1" height="1" fill="#696969"/><rect x="2" y="4" width="8" height="1" fill="#ffffff"/><rect x="10" y="4" width="1" height="1" fill="#e3e3e3"/><rect x="11" y="4" width="1" height="1" fill="#ffffff"/><rect x="0" y="5" width="1" height="1" fill="#a0a0a0"/><rect x="1" y="5" width="1" height="1" fill="#696969"/><rect x="2" y="5" width="8" height="1" fill="#ffffff"/><rect x="10" y="5" width="1" height="1" fill="#e3e3e3"/><rect x="11" y="5" width="1" height="1" fill="#ffffff"/><rect x="0" y="6" width="1" height="1" fill="#a0a0a0"/><rect x="1" y="6" width="1" height="1" fill="#696969"/><rect x="2" y="6" width="8" height="1" fill="#ffffff"/><rect x="10" y="6" width="1" height="1" fill="#e3e3e3"/><rect x="11" y="6" width="1" height="1" fill="#ffffff"/><rect x="0" y="7" width="1" height="1" fill="#a0a0a0"/><rect x="1" y="7" width="1" height="1" fill="#696969"/><rect x="2" y="7" width="8" height="1" fill="#ffffff"/><rect x="10" y="7" width="1" height="1" fill="#e3e3e3"/><rect x="11" y="7" width="1" height="1" fill="#ffffff"/><rect x="1" y="8" width="1" height="1" fill="#a0a0a0"/><rect x="2" y="8" width="1" height="1" fill="#696969"/><rect x="3" y="8" width="6" height="1" fill="#ffffff"/><rect x="9" y="8" width="1" height="1" fill="#e3e3e3"/><rect x="10" y="8" width="1" height="1" fill="#ffffff"/><rect x="1" y="9" width="1" height="1" fill="#a0a0a0"/><rect x="2" y="9" width="2" height="1" fill="#e3e3e3"/><rect x="4" y="9" width="4" height="1" fill="#ffffff"/><rect x="8" y="9" width="2" height="1" fill="#e3e3e3"/><rect x="10" y="9" width="1" height="1" fill="#ffffff"/><rect x="2" y="10" width="2" height="1" fill="#ffffff"/><rect x="4" y="10" width="4" height="1" fill="#e3e3e3"/><rect x="8" y="10" width="2" height="1" fill="#ffffff"/><rect x="4" y="11" width="4" height="1" fill="#ffffff"/><rect x="5" y="4" width="2" height="1" fill="#000000"/><rect x="4" y="5" width="4" height="1" fill="#000000"/><rect x="4" y="6" width="4" height="1" fill="#000000"/><rect x="5" y="7" width="2" height="1" fill="#000000"/></svg><svg class="px" style="left:12px;top:476px" width="12" height="12"><rect x="4" y="0" width="4" height="1" fill="#a0a0a0"/><rect x="2" y="1" width="2" height="1" fill="#a0a0a0"/><rect x="4" y="1" width="4" height="1" fill="#696969"/><rect x="8" y="1" width="2" height="1" fill="#a0a0a0"/><rect x="1" y="2" width="1" height="1" fill="#a0a0a0"/><rect x="2" y="2" width="2" height="1" fill="#696969"/><rect x="4" y="2" width="4" height="1" fill="#ffffff"/><rect x="8" y="2" width="2" height="1" fill="#696969"/><rect x="10" y="2" width="1" height="1" fill="#e3e3e3"/><rect x="1" y="3" width="1" height="1" fill="#a0a0a0"/><rect x="2" y="3" width="1" height="1" fill="#696969"/><rect x="3" y="3" width="6" height="1" fill="#ffffff"/><rect x="9" y="3" width="1" height="1" fill="#e3e3e3"/><rect x="10" y="3" width="1" height="1" fill="#ffffff"/><rect x="0" y="4" width="1" height="1" fill="#a0a0a0"/><rect x="1" y="4" width="1" height="1" fill="#696969"/><rect x="2" y="4" width="8" height="1" fill="#ffffff"/><rect x="10" y="4" width="1" height="1" fill="#e3e3e3"/><rect x="11" y="4" width="1" height="1" fill="#ffffff"/><rect x="0" y="5" width="1" height="1" fill="#a0a0a0"/><rect x="1" y="5" width="1" height="1" fill="#696969"/><rect x="2" y="5" width="8" height="1" fill="#ffffff"/><rect x="10" y="5" width="1" height="1" fill="#e3e3e3"/><rect x="11" y="5" width="1" height="1" fill="#ffffff"/><rect x="0" y="6" width="1" height="1" fill="#a0a0a0"/><rect x="1" y="6" width="1" height="1" fill="#696969"/><rect x="2" y="6" width="8" height="1" fill="#ffffff"/><rect x="10" y="6" width="1" height="1" fill="#e3e3e3"/><rect x="11" y="6" width="1" height="1" fill="#ffffff"/><rect x="0" y="7" width="1" height="1" fill="#a0a0a0"/><rect x="1" y="7" width="1" height="1" fill="#696969"/><rect x="2" y="7" width="8" height="1" fill="#ffffff"/><rect x="10" y="7" width="1" height="1" fill="#e3e3e3"/><rect x="11" y="7" width="1" height="1" fill="#ffffff"/><rect x="1" y="8" width="1" height="1" fill="#a0a0a0"/><rect x="2" y="8" width="1" height="1" fill="#696969"/><rect x="3" y="8" width="6" height="1" fill="#ffffff"/><rect x="9" y="8" width="1" height="1" fill="#e3e3e3"/><rect x="10" y="8" width="1" height="1" fill="#ffffff"/><rect x="1" y="9" width="1" height="1" fill="#a0a0a0"/><rect x="2" y="9" width="2" height="1" fill="#e3e3e3"/><rect x="4" y="9" width="4" height="1" fill="#ffffff"/><rect x="8" y="9" width="2" height="1" fill="#e3e3e3"/><rect x="10" y="9" width="1" height="1" fill="#ffffff"/><rect x="2" y="10" width="2" height="1" fill="#ffffff"/><rect x="4" y="10" width="4" height="1" fill="#e3e3e3"/><rect x="8" y="10" width="2" height="1" fill="#ffffff"/><rect x="4" y="11" width="4" height="1" fill="#ffffff"/></svg><svg class="px" style="left:12px;top:496px" width="12" height="12"><rect x="4" y="0" width="4" height="1" fill="#a0a0a0"/><rect x="2" y="1" width="2" height="1" fill="#a0a0a0"/><rect x="4" y="1" width="4" height="1" fill="#696969"/><rect x="8" y="1" width="2" height="1" fill="#a0a0a0"/><rect x="1" y="2" width="1" height="1" fill="#a0a0a0"/><rect x="2" y="2" width="2" height="1" fill="#696969"/><rect x="4" y="2" width="4" height="1" fill="#ffffff"/><rect x="8" y="2" width="2" height="1" fill="#696969"/><rect x="10" y="2" width="1" height="1" fill="#e3e3e3"/><rect x="1" y="3" width="1" height="1" fill="#a0a0a0"/><rect x="2" y="3" width="1" height="1" fill="#696969"/><rect x="3" y="3" width="6" height="1" fill="#ffffff"/><rect x="9" y="3" width="1" height="1" fill="#e3e3e3"/><rect x="10" y="3" width="1" height="1" fill="#ffffff"/><rect x="0" y="4" width="1" height="1" fill="#a0a0a0"/><rect x="1" y="4" width="1" height="1" fill="#696969"/><rect x="2" y="4" width="8" height="1" fill="#ffffff"/><rect x="10" y="4" width="1" height="1" fill="#e3e3e3"/><rect x="11" y="4" width="1" height="1" fill="#ffffff"/><rect x="0" y="5" width="1" height="1" fill="#a0a0a0"/><rect x="1" y="5" width="1" height="1" fill="#696969"/><rect x="2" y="5" width="8" height="1" fill="#ffffff"/><rect x="10" y="5" width="1" height="1" fill="#e3e3e3"/><rect x="11" y="5" width="1" height="1" fill="#ffffff"/><rect x="0" y="6" width="1" height="1" fill="#a0a0a0"/><rect x="1" y="6" width="1" height="1" fill="#696969"/><rect x="2" y="6" width="8" height="1" fill="#ffffff"/><rect x="10" y="6" width="1" height="1" fill="#e3e3e3"/><rect x="11" y="6" width="1" height="1" fill="#ffffff"/><rect x="0" y="7" width="1" height="1" fill="#a0a0a0"/><rect x="1" y="7" width="1" height="1" fill="#696969"/><rect x="2" y="7" width="8" height="1" fill="#ffffff"/><rect x="10" y="7" width="1" height="1" fill="#e3e3e3"/><rect x="11" y="7" width="1" height="1" fill="#ffffff"/><rect x="1" y="8" width="1" height="1" fill="#a0a0a0"/><rect x="2" y="8" width="1" height="1" fill="#696969"/><rect x="3" y="8" width="6" height="1" fill="#ffffff"/><rect x="9" y="8" width="1" height="1" fill="#e3e3e3"/><rect x="10" y="8" width="1" height="1" fill="#ffffff"/><rect x="1" y="9" width="1" height="1" fill="#a0a0a0"/><rect x="2" y="9" width="2" height="1" fill="#e3e3e3"/><rect x="4" y="9" width="4" height="1" fill="#ffffff"/><rect x="8" y="9" width="2" height="1" fill="#e3e3e3"/><rect x="10" y="9" width="1" height="1" fill="#ffffff"/><rect x="2" y="10" width="2" height="1" fill="#ffffff"/><rect x="4" y="10" width="4" height="1" fill="#e3e3e3"/><rect x="8" y="10" width="2" height="1" fill="#ffffff"/><rect x="4" y="11" width="4" height="1" fill="#ffffff"/></svg><div class="b" style="left:161px;top:375px;width:30px;height:20px;line-height:18px;"><span class="pl" style="left:11px;top:5px"></span></div><div class="b" style="left:161px;top:435px;width:30px;height:20px;line-height:18px;"><span class="mi" style="left:12px;top:8px"></span></div><div class="b" style="left:351px;top:375px;width:20px;height:15px;line-height:13px;"><span class="mi"></span></div><div class="b" style="left:373px;top:375px;width:20px;height:15px;line-height:13px;"><span class="pl"></span></div><div class="b" style="left:351px;top:400px;width:20px;height:15px;line-height:13px;"><span class="mi"></span></div><div class="b" style="left:373px;top:400px;width:20px;height:15px;line-height:13px;"><span class="pl"></span></div><div class="b" style="left:351px;top:425px;width:20px;height:15px;line-height:13px;"><span class="mi"></span></div><div class="b" style="left:373px;top:425px;width:20px;height:15px;line-height:13px;"><span class="pl"></span></div><div class="b" style="left:351px;top:450px;width:20px;height:15px;line-height:13px;"><span class="mi"></span></div><div class="b" style="left:373px;top:450px;width:20px;height:15px;line-height:13px;"><span class="pl"></span></div><div class="b" style="left:351px;top:475px;width:20px;height:15px;line-height:13px;"><span class="mi"></span></div><div class="b" style="left:373px;top:475px;width:20px;height:15px;line-height:13px;"><span class="pl"></span></div><div class="b" style="left:616px;top:375px;width:20px;height:15px;line-height:13px;"><span class="mi"></span></div><div class="b" style="left:638px;top:375px;width:20px;height:15px;line-height:13px;"><span class="pl"></span></div><div class="b" style="left:616px;top:400px;width:20px;height:15px;line-height:13px;"><span class="mi"></span></div><div class="b" style="left:638px;top:400px;width:20px;height:15px;line-height:13px;"><span class="pl"></span></div><div class="b" style="left:616px;top:425px;width:20px;height:15px;line-height:13px;"><span class="mi"></span></div><div class="b" style="left:638px;top:425px;width:20px;height:15px;line-height:13px;"><span class="pl"></span></div><div class="b" style="left:616px;top:450px;width:20px;height:15px;line-height:13px;"><span class="mi"></span></div><div class="b" style="left:638px;top:450px;width:20px;height:15px;line-height:13px;"><span class="pl"></span></div><div class="b" style="left:889px;top:375px;width:20px;height:15px;line-height:13px;"><span class="mi"></span></div><div class="b" style="left:911px;top:375px;width:20px;height:15px;line-height:13px;"><span class="pl"></span></div><div class="b" style="left:889px;top:400px;width:20px;height:15px;line-height:13px;"><span class="mi"></span></div><div class="b" style="left:911px;top:400px;width:20px;height:15px;line-height:13px;"><span class="pl"></span></div><div class="b" style="left:889px;top:425px;width:20px;height:15px;line-height:13px;"><span class="mi"></span></div><div class="b" style="left:911px;top:425px;width:20px;height:15px;line-height:13px;"><span class="pl"></span></div><div class="b" style="left:161px;top:523px;width:50px;height:25px;line-height:23px;"></div><div class="b" style="left:211px;top:523px;width:50px;height:25px;line-height:23px;"></div><div class="b" style="left:294px;top:523px;width:50px;height:25px;line-height:23px;"></div><div class="b" style="left:344px;top:523px;width:50px;height:25px;line-height:23px;"></div><div class="t" style="left:29.45px;top:40px;letter-spacing:1.0px;transform:scaleX(0.8545);transform-origin:0 0;">Motor 1</div><div class="t" style="left:29.45px;top:60px;letter-spacing:1.0px;transform:scaleX(0.8545);transform-origin:0 0;">Motor 2</div><div class="t" style="left:29.45px;top:80px;letter-spacing:1.0px;transform:scaleX(0.8545);transform-origin:0 0;">Motor 3</div><div class="t" style="left:10.71px;top:146px;letter-spacing:1.0px;transform:scaleX(0.8932);transform-origin:0 0;">Display:</div><div class="t" style="left:31.40px;top:165px;letter-spacing:1.0px;transform:scaleX(0.8660);transform-origin:0 0;">Target</div><div class="t" style="left:30.52px;top:185px;letter-spacing:1.0px;transform:scaleX(0.8786);transform-origin:0 0;">Feedback</div><div class="t" style="left:30.41px;top:205px;letter-spacing:1.0px;transform:scaleX(0.9912);transform-origin:0 0;">PWM</div><div class="t" style="left:30.75px;top:225px;letter-spacing:1.0px;transform:scaleX(0.8479);transform-origin:0 0;">Motor Limits</div><div class="t" style="left:30.77px;top:245px;letter-spacing:1.0px;transform:scaleX(0.8333);transform-origin:0 0;">Input Clipping</div><div class="t" style="left:10.73px;top:356px;letter-spacing:1.0px;transform:scaleX(0.8693);transform-origin:0 0;">Out Mode:</div><div class="t" style="left:29.64px;top:375px;letter-spacing:1.0px;transform:scaleX(0.8625);transform-origin:0 0;">Monitor</div><div class="t" style="left:29.62px;top:395px;letter-spacing:1.0px;transform:scaleX(0.8765);transform-origin:0 0;">Square</div><div class="t" style="left:30.50px;top:415px;letter-spacing:1.0px;transform:scaleX(0.8633);transform-origin:0 0;">Triangle</div><div class="t" style="left:29.61px;top:435px;letter-spacing:1.0px;transform:scaleX(0.8935);transform-origin:0 0;">Sine</div><div class="t" style="left:29.63px;top:455px;letter-spacing:1.0px;transform:scaleX(0.8735);transform-origin:0 0;">Motion</div><div class="t" style="left:29.58px;top:475px;letter-spacing:1.0px;transform:scaleX(0.9157);transform-origin:0 0;">Manual</div><div class="t" style="left:29.63px;top:495px;letter-spacing:1.0px;transform:scaleX(0.8748);transform-origin:0 0;">UDP Pass thru</div><div class="t" style="left:30.53px;top:516px;letter-spacing:1.0px;transform:scaleX(0.8667);transform-origin:0 0;">pks/sec = 0</div><div class="t" style="left:160.84px;top:395px;letter-spacing:1.0px;transform:scaleX(0.8562);transform-origin:0 0;">Step</div><div class="t" style="left:169.90px;top:416px;letter-spacing:0px;transform:scaleX(1.0000);transform-origin:0 0;">1</div><div class="t" style="left:265.77px;top:376px;letter-spacing:1.0px;transform:scaleX(0.8273);transform-origin:0 0;">Fpid / 1</div><div class="t" style="left:265.73px;top:401px;letter-spacing:1.0px;transform:scaleX(0.8688);transform-origin:0 0;">Kp = 400</div><div class="t" style="left:265.73px;top:426px;letter-spacing:1.0px;transform:scaleX(0.8732);transform-origin:0 0;">Ki = 0</div><div class="t" style="left:265.73px;top:451px;letter-spacing:1.0px;transform:scaleX(0.8652);transform-origin:0 0;">Kd = 3</div><div class="t" style="left:265.73px;top:476px;letter-spacing:1.0px;transform:scaleX(0.8652);transform-origin:0 0;">Ks = 4</div><div class="t" style="left:485.92px;top:376px;letter-spacing:1.0px;transform:scaleX(0.8802);transform-origin:0 0;">Fpwm = 20kHz</div><div class="t" style="left:485.89px;top:401px;letter-spacing:1.0px;transform:scaleX(0.9056);transform-origin:0 0;">PWMmin = 0</div><div class="t" style="left:485.89px;top:426px;letter-spacing:1.0px;transform:scaleX(0.9126);transform-origin:0 0;">PWMmax = 220</div><div class="t" style="left:485.90px;top:451px;letter-spacing:1.0px;transform:scaleX(0.9048);transform-origin:0 0;">PWMrev = 220</div><div class="t" style="left:486.80px;top:501px;letter-spacing:1.0px;transform:scaleX(0.8389);transform-origin:0 0;">Tx: [ A 01 DB ]</div><div class="t" style="left:485.94px;top:526px;letter-spacing:1.0px;transform:scaleX(0.8592);transform-origin:0 0;">Rx: [ a 10 19 ]</div><div class="t" style="left:485.92px;top:551px;letter-spacing:1.0px;transform:scaleX(0.8752);transform-origin:0 0;">Calcs/sec = 4000</div><div class="t" style="left:750.62px;top:376px;letter-spacing:1.0px;transform:scaleX(0.8810);transform-origin:0 0;">Max Limits = 178</div><div class="t" style="left:750.65px;top:401px;letter-spacing:1.0px;transform:scaleX(0.8521);transform-origin:0 0;">Clip Input = 217</div><div class="t" style="left:750.60px;top:426px;letter-spacing:1.0px;transform:scaleX(0.8970);transform-origin:0 0;">Deadzone = 0</div><div class="t" style="left:751.50px;top:476px;letter-spacing:1.0px;transform:scaleX(0.8547);transform-origin:0 0;">Arduino SMC3 ver 1.00</div><div class="t" style="left:751.50px;top:501px;letter-spacing:1.0px;transform:scaleX(0.8563);transform-origin:0 0;">Windows Utility ver 1.01</div><div class="t" style="left:750.62px;top:526px;letter-spacing:1.0px;transform:scaleX(0.8767);transform-origin:0 0;">UDP Port 20017</div><div class="t" style="left:750.65px;top:551px;letter-spacing:1.0px;transform:scaleX(0.8490);transform-origin:0 0;">Comm Port 5</div><div class="t" style="left:193.96px;top:551px;letter-spacing:1.0px;transform:scaleX(0.8450);transform-origin:0 0;">Settings saved to file</div><div class="t" style="left:105.78px;top:39px;letter-spacing:1.0px;transform:scaleX(0.9150);transform-origin:0 0;">ON</div><div class="t" style="left:105.78px;top:59px;letter-spacing:1.0px;transform:scaleX(0.9150);transform-origin:0 0;">ON</div><div class="t" style="left:105.78px;top:79px;letter-spacing:1.0px;transform:scaleX(0.9150);transform-origin:0 0;">ON</div><div class="t" style="left:31.71px;top:282px;letter-spacing:1.0px;transform:scaleX(0.8906);transform-origin:0 0;">Save Image</div><div class="t" style="left:168.66px;top:528px;letter-spacing:1.0px;transform:scaleX(0.9353);transform-origin:0 0;">Save</div><div class="t" style="left:219.01px;top:528px;letter-spacing:1.0px;transform:scaleX(0.8943);transform-origin:0 0;">Load</div><div class="t" style="left:300.70px;top:528px;letter-spacing:1.0px;transform:scaleX(0.8925);transform-origin:0 0;">-&gt; M2</div><div class="t" style="left:350.80px;top:528px;letter-spacing:1.0px;transform:scaleX(0.8800);transform-origin:0 0;">-&gt; M3</div><div style="position:absolute;left:351px;top:548px;width:14px;height:18px;overflow:hidden"><div class="t" style="left:-2.6px;top:3px;transform:scaleX(0.88);transform-origin:0 0">ed</div></div><div style="position:absolute;left:947px;top:57px;width:1px;height:257px;background:#000"></div><div style="position:absolute;left:942px;top:190px;width:11px;height:11px;border-radius:50%;background:#0000ff"></div><div class="b" style="left:967px;top:114px;width:20px;height:15px;line-height:13px;"><span class="mi"></span></div><div class="b" style="left:967px;top:178px;width:20px;height:15px;line-height:13px;"><span class="mi"></span></div><div class="b" style="left:967px;top:242px;width:20px;height:15px;line-height:13px;"><span class="mi"></span></div>
</body></html>
